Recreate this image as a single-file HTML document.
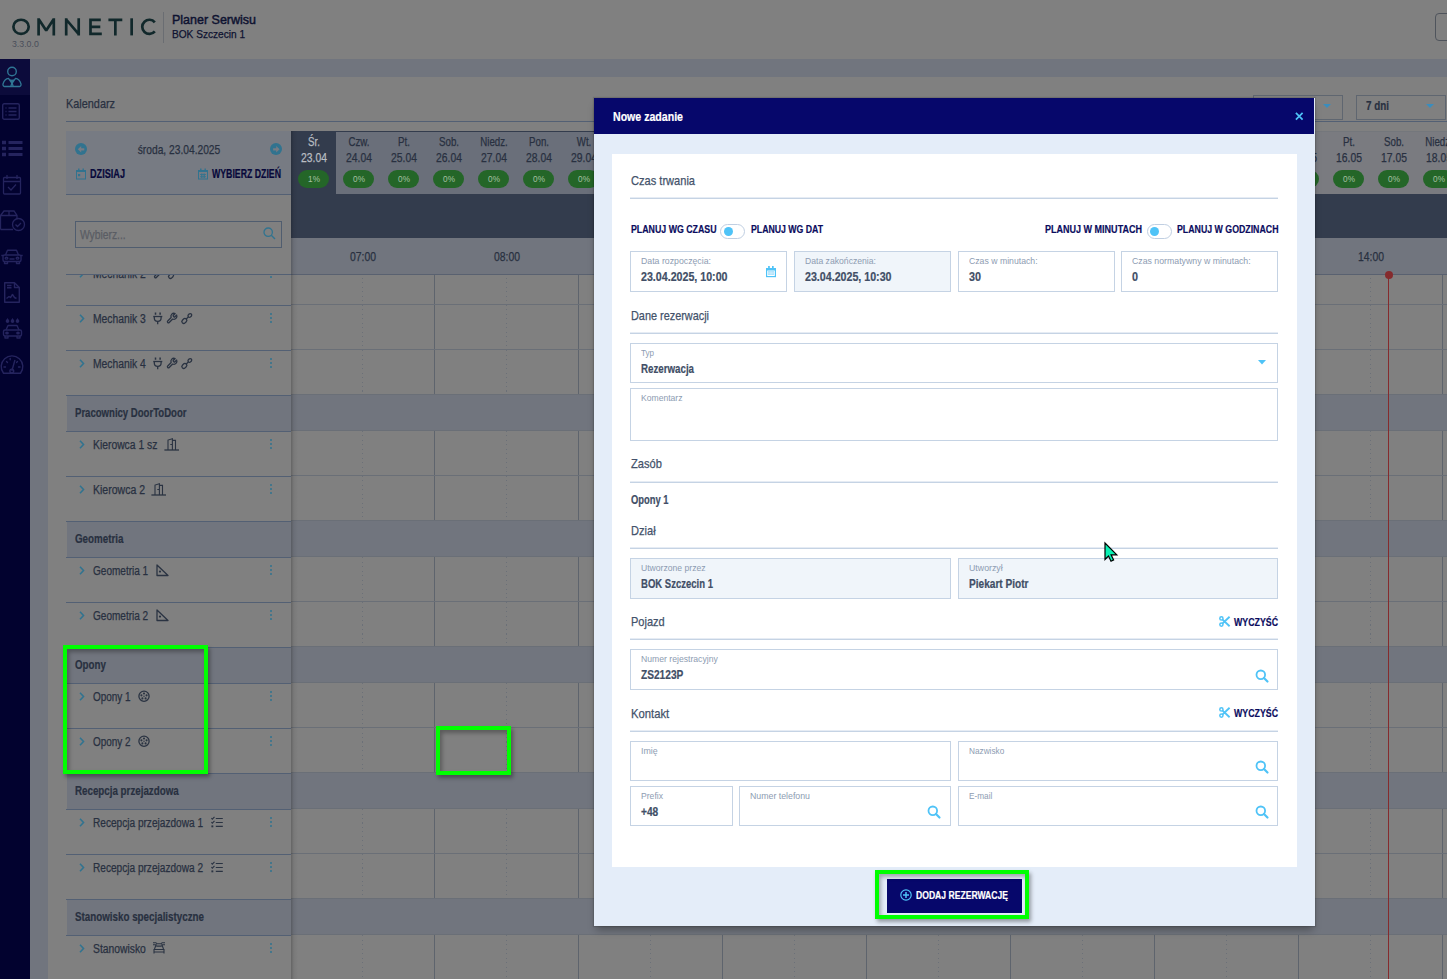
<!DOCTYPE html>
<html><head><meta charset="utf-8"><style>
html,body{margin:0;padding:0;}
body{width:1447px;height:979px;position:relative;overflow:hidden;background:#808080;font-family:"Liberation Sans",sans-serif;}
.a{position:absolute;}
.t{position:absolute;white-space:nowrap;line-height:1;}
svg.a{overflow:visible;}
</style></head><body>
<div class="a" style="left:0;top:0;width:1447px;height:59px;background:#808080"></div>
<svg class="a" style="left:0px;top:0px;" width="170" height="50" viewBox="0 0 170 50"><g stroke="#11282b" stroke-width="2.7" fill="none" stroke-linejoin="miter" stroke-miterlimit="1.5"><ellipse cx="21.05" cy="26.85" rx="7.65" ry="7.1"/><path d="M38.6 35.4V18.3M38.6 19L46.2 30.5 53.8 19M53.8 18.3V35.4" stroke-linecap="butt"/><path d="M66.2 35.4V18.3M66.2 19.5L78.7 34.2M78.7 35.4V18.3"/><path d="M100.8 19.8H90.5V33.9H101.8M90.5 26.85H100.3"/><path d="M108.4 19.8H122.3M115.35 19.8V35.4"/><path d="M131.65 18.3V35.4"/><path d="M154.8 22.3A7.1 7.1 0 1 0 154.8 31.4"/></g></svg>
<div class="t" style="left:12px;top:40.40px;transform-origin:0 0;font-size:8.5px;color:#4a4e5a;transform:scaleX(1.0310);">3.3.0.0</div>
<div class="a" style="left:163px;top:12px;width:1px;height:31px;background:#6a6d72;"></div>
<div class="t" style="left:172px;top:13.00px;transform-origin:0 0;font-size:13px;color:#0e1230;-webkit-text-stroke:0.25px #0e1230;transform:scaleX(0.9608);-webkit-text-stroke:0.45px #0e1230;">Planer Serwisu</div>
<div class="t" style="left:172px;top:28.89px;transform-origin:0 0;font-size:11px;color:#0e1230;-webkit-text-stroke:0.25px #0e1230;transform:scaleX(0.9185);">BOK Szczecin 1</div>
<div class="a" style="left:1435px;top:13px;width:30px;height:28px;border:1px solid #4f545c;border-radius:4px;box-sizing:border-box"></div>
<div class="a" style="left:0px;top:59px;width:30px;height:920px;background:#02022f;"></div>
<div class="a" style="left:0px;top:59px;width:30px;height:36px;background:#0c0b3b;"></div>
<div class="a" style="left:30px;top:59px;width:1417px;height:920px;background:#71757e;"></div>
<div class="a" style="left:48px;top:77px;width:1399px;height:902px;background:#808080;"></div>
<div class="t" style="left:66px;top:97.20px;transform-origin:0 0;font-size:13px;color:#283040;-webkit-text-stroke:0.25px #283040;transform:scaleX(0.8371);">Kalendarz</div>
<div class="a" style="left:66px;top:121px;width:1381px;height:1px;background:#536074;"></div>
<div class="a" style="left:1253px;top:95px;width:90px;height:25px;border:1px solid #5f6670;box-sizing:border-box"></div>
<div class="a" style="left:1356px;top:95px;width:90px;height:25px;border:1px solid #5f6670;box-sizing:border-box"></div>
<div class="t" style="left:1366px;top:100.24px;transform-origin:0 0;font-size:12px;color:#283040;font-weight:700;-webkit-text-stroke:0.2px #283040;transform:scaleX(0.8213);">7 dni</div>
<svg class="a" style="left:1323px;top:104px;" width="8" height="5" viewBox="0 0 8 5"><path d="M0 0H8L4 4Z" fill="#3a8dbd"/></svg>
<svg class="a" style="left:1426px;top:104px;" width="8" height="5" viewBox="0 0 8 5"><path d="M0 0H8L4 4Z" fill="#3a8dbd"/></svg>
<div class="a" style="left:434px;top:260px;width:1px;height:44px;background:#5e646d;"></div>
<div class="a" style="left:578px;top:260px;width:1px;height:44px;background:#5e646d;"></div>
<div class="a" style="left:722px;top:260px;width:1px;height:44px;background:#5e646d;"></div>
<div class="a" style="left:866px;top:260px;width:1px;height:44px;background:#5e646d;"></div>
<div class="a" style="left:1010px;top:260px;width:1px;height:44px;background:#5e646d;"></div>
<div class="a" style="left:1154px;top:260px;width:1px;height:44px;background:#5e646d;"></div>
<div class="a" style="left:1298px;top:260px;width:1px;height:44px;background:#5e646d;"></div>
<div class="a" style="left:1442px;top:260px;width:1px;height:44px;background:#5e646d;"></div>
<div class="a" style="left:362px;top:260px;width:1px;height:44px;background:repeating-linear-gradient(to bottom,#6b7078 0 1px,transparent 1px 4.5px)"></div>
<div class="a" style="left:506px;top:260px;width:1px;height:44px;background:repeating-linear-gradient(to bottom,#6b7078 0 1px,transparent 1px 4.5px)"></div>
<div class="a" style="left:650px;top:260px;width:1px;height:44px;background:repeating-linear-gradient(to bottom,#6b7078 0 1px,transparent 1px 4.5px)"></div>
<div class="a" style="left:794px;top:260px;width:1px;height:44px;background:repeating-linear-gradient(to bottom,#6b7078 0 1px,transparent 1px 4.5px)"></div>
<div class="a" style="left:938px;top:260px;width:1px;height:44px;background:repeating-linear-gradient(to bottom,#6b7078 0 1px,transparent 1px 4.5px)"></div>
<div class="a" style="left:1082px;top:260px;width:1px;height:44px;background:repeating-linear-gradient(to bottom,#6b7078 0 1px,transparent 1px 4.5px)"></div>
<div class="a" style="left:1226px;top:260px;width:1px;height:44px;background:repeating-linear-gradient(to bottom,#6b7078 0 1px,transparent 1px 4.5px)"></div>
<div class="a" style="left:1370px;top:260px;width:1px;height:44px;background:repeating-linear-gradient(to bottom,#6b7078 0 1px,transparent 1px 4.5px)"></div>
<div class="a" style="left:291px;top:304px;width:1156px;height:1px;background:#6a6f77;"></div>
<div class="a" style="left:66px;top:305px;width:225px;height:1px;background:#536074;"></div>
<div class="a" style="left:434px;top:305px;width:1px;height:44px;background:#5e646d;"></div>
<div class="a" style="left:578px;top:305px;width:1px;height:44px;background:#5e646d;"></div>
<div class="a" style="left:722px;top:305px;width:1px;height:44px;background:#5e646d;"></div>
<div class="a" style="left:866px;top:305px;width:1px;height:44px;background:#5e646d;"></div>
<div class="a" style="left:1010px;top:305px;width:1px;height:44px;background:#5e646d;"></div>
<div class="a" style="left:1154px;top:305px;width:1px;height:44px;background:#5e646d;"></div>
<div class="a" style="left:1298px;top:305px;width:1px;height:44px;background:#5e646d;"></div>
<div class="a" style="left:1442px;top:305px;width:1px;height:44px;background:#5e646d;"></div>
<div class="a" style="left:362px;top:305px;width:1px;height:44px;background:repeating-linear-gradient(to bottom,#6b7078 0 1px,transparent 1px 4.5px)"></div>
<div class="a" style="left:506px;top:305px;width:1px;height:44px;background:repeating-linear-gradient(to bottom,#6b7078 0 1px,transparent 1px 4.5px)"></div>
<div class="a" style="left:650px;top:305px;width:1px;height:44px;background:repeating-linear-gradient(to bottom,#6b7078 0 1px,transparent 1px 4.5px)"></div>
<div class="a" style="left:794px;top:305px;width:1px;height:44px;background:repeating-linear-gradient(to bottom,#6b7078 0 1px,transparent 1px 4.5px)"></div>
<div class="a" style="left:938px;top:305px;width:1px;height:44px;background:repeating-linear-gradient(to bottom,#6b7078 0 1px,transparent 1px 4.5px)"></div>
<div class="a" style="left:1082px;top:305px;width:1px;height:44px;background:repeating-linear-gradient(to bottom,#6b7078 0 1px,transparent 1px 4.5px)"></div>
<div class="a" style="left:1226px;top:305px;width:1px;height:44px;background:repeating-linear-gradient(to bottom,#6b7078 0 1px,transparent 1px 4.5px)"></div>
<div class="a" style="left:1370px;top:305px;width:1px;height:44px;background:repeating-linear-gradient(to bottom,#6b7078 0 1px,transparent 1px 4.5px)"></div>
<div class="a" style="left:291px;top:349px;width:1156px;height:1px;background:#6a6f77;"></div>
<div class="a" style="left:66px;top:350px;width:225px;height:1px;background:#536074;"></div>
<div class="a" style="left:434px;top:350px;width:1px;height:44px;background:#5e646d;"></div>
<div class="a" style="left:578px;top:350px;width:1px;height:44px;background:#5e646d;"></div>
<div class="a" style="left:722px;top:350px;width:1px;height:44px;background:#5e646d;"></div>
<div class="a" style="left:866px;top:350px;width:1px;height:44px;background:#5e646d;"></div>
<div class="a" style="left:1010px;top:350px;width:1px;height:44px;background:#5e646d;"></div>
<div class="a" style="left:1154px;top:350px;width:1px;height:44px;background:#5e646d;"></div>
<div class="a" style="left:1298px;top:350px;width:1px;height:44px;background:#5e646d;"></div>
<div class="a" style="left:1442px;top:350px;width:1px;height:44px;background:#5e646d;"></div>
<div class="a" style="left:362px;top:350px;width:1px;height:44px;background:repeating-linear-gradient(to bottom,#6b7078 0 1px,transparent 1px 4.5px)"></div>
<div class="a" style="left:506px;top:350px;width:1px;height:44px;background:repeating-linear-gradient(to bottom,#6b7078 0 1px,transparent 1px 4.5px)"></div>
<div class="a" style="left:650px;top:350px;width:1px;height:44px;background:repeating-linear-gradient(to bottom,#6b7078 0 1px,transparent 1px 4.5px)"></div>
<div class="a" style="left:794px;top:350px;width:1px;height:44px;background:repeating-linear-gradient(to bottom,#6b7078 0 1px,transparent 1px 4.5px)"></div>
<div class="a" style="left:938px;top:350px;width:1px;height:44px;background:repeating-linear-gradient(to bottom,#6b7078 0 1px,transparent 1px 4.5px)"></div>
<div class="a" style="left:1082px;top:350px;width:1px;height:44px;background:repeating-linear-gradient(to bottom,#6b7078 0 1px,transparent 1px 4.5px)"></div>
<div class="a" style="left:1226px;top:350px;width:1px;height:44px;background:repeating-linear-gradient(to bottom,#6b7078 0 1px,transparent 1px 4.5px)"></div>
<div class="a" style="left:1370px;top:350px;width:1px;height:44px;background:repeating-linear-gradient(to bottom,#6b7078 0 1px,transparent 1px 4.5px)"></div>
<div class="a" style="left:291px;top:394px;width:1156px;height:1px;background:#6a6f77;"></div>
<div class="a" style="left:66px;top:395px;width:225px;height:1px;background:#536074;"></div>
<div class="a" style="left:291px;top:395px;width:1156px;height:35px;background:#71757e;"></div>
<div class="a" style="left:67px;top:396px;width:224px;height:35px;background:#71757e;"></div>
<div class="a" style="left:291px;top:430px;width:1156px;height:1px;background:#6a6f77;"></div>
<div class="a" style="left:66px;top:431px;width:225px;height:1px;background:#536074;"></div>
<div class="a" style="left:434px;top:431px;width:1px;height:44px;background:#5e646d;"></div>
<div class="a" style="left:578px;top:431px;width:1px;height:44px;background:#5e646d;"></div>
<div class="a" style="left:722px;top:431px;width:1px;height:44px;background:#5e646d;"></div>
<div class="a" style="left:866px;top:431px;width:1px;height:44px;background:#5e646d;"></div>
<div class="a" style="left:1010px;top:431px;width:1px;height:44px;background:#5e646d;"></div>
<div class="a" style="left:1154px;top:431px;width:1px;height:44px;background:#5e646d;"></div>
<div class="a" style="left:1298px;top:431px;width:1px;height:44px;background:#5e646d;"></div>
<div class="a" style="left:1442px;top:431px;width:1px;height:44px;background:#5e646d;"></div>
<div class="a" style="left:362px;top:431px;width:1px;height:44px;background:repeating-linear-gradient(to bottom,#6b7078 0 1px,transparent 1px 4.5px)"></div>
<div class="a" style="left:506px;top:431px;width:1px;height:44px;background:repeating-linear-gradient(to bottom,#6b7078 0 1px,transparent 1px 4.5px)"></div>
<div class="a" style="left:650px;top:431px;width:1px;height:44px;background:repeating-linear-gradient(to bottom,#6b7078 0 1px,transparent 1px 4.5px)"></div>
<div class="a" style="left:794px;top:431px;width:1px;height:44px;background:repeating-linear-gradient(to bottom,#6b7078 0 1px,transparent 1px 4.5px)"></div>
<div class="a" style="left:938px;top:431px;width:1px;height:44px;background:repeating-linear-gradient(to bottom,#6b7078 0 1px,transparent 1px 4.5px)"></div>
<div class="a" style="left:1082px;top:431px;width:1px;height:44px;background:repeating-linear-gradient(to bottom,#6b7078 0 1px,transparent 1px 4.5px)"></div>
<div class="a" style="left:1226px;top:431px;width:1px;height:44px;background:repeating-linear-gradient(to bottom,#6b7078 0 1px,transparent 1px 4.5px)"></div>
<div class="a" style="left:1370px;top:431px;width:1px;height:44px;background:repeating-linear-gradient(to bottom,#6b7078 0 1px,transparent 1px 4.5px)"></div>
<div class="a" style="left:291px;top:475px;width:1156px;height:1px;background:#6a6f77;"></div>
<div class="a" style="left:66px;top:476px;width:225px;height:1px;background:#536074;"></div>
<div class="a" style="left:434px;top:476px;width:1px;height:44px;background:#5e646d;"></div>
<div class="a" style="left:578px;top:476px;width:1px;height:44px;background:#5e646d;"></div>
<div class="a" style="left:722px;top:476px;width:1px;height:44px;background:#5e646d;"></div>
<div class="a" style="left:866px;top:476px;width:1px;height:44px;background:#5e646d;"></div>
<div class="a" style="left:1010px;top:476px;width:1px;height:44px;background:#5e646d;"></div>
<div class="a" style="left:1154px;top:476px;width:1px;height:44px;background:#5e646d;"></div>
<div class="a" style="left:1298px;top:476px;width:1px;height:44px;background:#5e646d;"></div>
<div class="a" style="left:1442px;top:476px;width:1px;height:44px;background:#5e646d;"></div>
<div class="a" style="left:362px;top:476px;width:1px;height:44px;background:repeating-linear-gradient(to bottom,#6b7078 0 1px,transparent 1px 4.5px)"></div>
<div class="a" style="left:506px;top:476px;width:1px;height:44px;background:repeating-linear-gradient(to bottom,#6b7078 0 1px,transparent 1px 4.5px)"></div>
<div class="a" style="left:650px;top:476px;width:1px;height:44px;background:repeating-linear-gradient(to bottom,#6b7078 0 1px,transparent 1px 4.5px)"></div>
<div class="a" style="left:794px;top:476px;width:1px;height:44px;background:repeating-linear-gradient(to bottom,#6b7078 0 1px,transparent 1px 4.5px)"></div>
<div class="a" style="left:938px;top:476px;width:1px;height:44px;background:repeating-linear-gradient(to bottom,#6b7078 0 1px,transparent 1px 4.5px)"></div>
<div class="a" style="left:1082px;top:476px;width:1px;height:44px;background:repeating-linear-gradient(to bottom,#6b7078 0 1px,transparent 1px 4.5px)"></div>
<div class="a" style="left:1226px;top:476px;width:1px;height:44px;background:repeating-linear-gradient(to bottom,#6b7078 0 1px,transparent 1px 4.5px)"></div>
<div class="a" style="left:1370px;top:476px;width:1px;height:44px;background:repeating-linear-gradient(to bottom,#6b7078 0 1px,transparent 1px 4.5px)"></div>
<div class="a" style="left:291px;top:520px;width:1156px;height:1px;background:#6a6f77;"></div>
<div class="a" style="left:66px;top:521px;width:225px;height:1px;background:#536074;"></div>
<div class="a" style="left:291px;top:521px;width:1156px;height:35px;background:#71757e;"></div>
<div class="a" style="left:67px;top:522px;width:224px;height:35px;background:#71757e;"></div>
<div class="a" style="left:291px;top:556px;width:1156px;height:1px;background:#6a6f77;"></div>
<div class="a" style="left:66px;top:557px;width:225px;height:1px;background:#536074;"></div>
<div class="a" style="left:434px;top:557px;width:1px;height:44px;background:#5e646d;"></div>
<div class="a" style="left:578px;top:557px;width:1px;height:44px;background:#5e646d;"></div>
<div class="a" style="left:722px;top:557px;width:1px;height:44px;background:#5e646d;"></div>
<div class="a" style="left:866px;top:557px;width:1px;height:44px;background:#5e646d;"></div>
<div class="a" style="left:1010px;top:557px;width:1px;height:44px;background:#5e646d;"></div>
<div class="a" style="left:1154px;top:557px;width:1px;height:44px;background:#5e646d;"></div>
<div class="a" style="left:1298px;top:557px;width:1px;height:44px;background:#5e646d;"></div>
<div class="a" style="left:1442px;top:557px;width:1px;height:44px;background:#5e646d;"></div>
<div class="a" style="left:362px;top:557px;width:1px;height:44px;background:repeating-linear-gradient(to bottom,#6b7078 0 1px,transparent 1px 4.5px)"></div>
<div class="a" style="left:506px;top:557px;width:1px;height:44px;background:repeating-linear-gradient(to bottom,#6b7078 0 1px,transparent 1px 4.5px)"></div>
<div class="a" style="left:650px;top:557px;width:1px;height:44px;background:repeating-linear-gradient(to bottom,#6b7078 0 1px,transparent 1px 4.5px)"></div>
<div class="a" style="left:794px;top:557px;width:1px;height:44px;background:repeating-linear-gradient(to bottom,#6b7078 0 1px,transparent 1px 4.5px)"></div>
<div class="a" style="left:938px;top:557px;width:1px;height:44px;background:repeating-linear-gradient(to bottom,#6b7078 0 1px,transparent 1px 4.5px)"></div>
<div class="a" style="left:1082px;top:557px;width:1px;height:44px;background:repeating-linear-gradient(to bottom,#6b7078 0 1px,transparent 1px 4.5px)"></div>
<div class="a" style="left:1226px;top:557px;width:1px;height:44px;background:repeating-linear-gradient(to bottom,#6b7078 0 1px,transparent 1px 4.5px)"></div>
<div class="a" style="left:1370px;top:557px;width:1px;height:44px;background:repeating-linear-gradient(to bottom,#6b7078 0 1px,transparent 1px 4.5px)"></div>
<div class="a" style="left:291px;top:601px;width:1156px;height:1px;background:#6a6f77;"></div>
<div class="a" style="left:66px;top:602px;width:225px;height:1px;background:#536074;"></div>
<div class="a" style="left:434px;top:602px;width:1px;height:44px;background:#5e646d;"></div>
<div class="a" style="left:578px;top:602px;width:1px;height:44px;background:#5e646d;"></div>
<div class="a" style="left:722px;top:602px;width:1px;height:44px;background:#5e646d;"></div>
<div class="a" style="left:866px;top:602px;width:1px;height:44px;background:#5e646d;"></div>
<div class="a" style="left:1010px;top:602px;width:1px;height:44px;background:#5e646d;"></div>
<div class="a" style="left:1154px;top:602px;width:1px;height:44px;background:#5e646d;"></div>
<div class="a" style="left:1298px;top:602px;width:1px;height:44px;background:#5e646d;"></div>
<div class="a" style="left:1442px;top:602px;width:1px;height:44px;background:#5e646d;"></div>
<div class="a" style="left:362px;top:602px;width:1px;height:44px;background:repeating-linear-gradient(to bottom,#6b7078 0 1px,transparent 1px 4.5px)"></div>
<div class="a" style="left:506px;top:602px;width:1px;height:44px;background:repeating-linear-gradient(to bottom,#6b7078 0 1px,transparent 1px 4.5px)"></div>
<div class="a" style="left:650px;top:602px;width:1px;height:44px;background:repeating-linear-gradient(to bottom,#6b7078 0 1px,transparent 1px 4.5px)"></div>
<div class="a" style="left:794px;top:602px;width:1px;height:44px;background:repeating-linear-gradient(to bottom,#6b7078 0 1px,transparent 1px 4.5px)"></div>
<div class="a" style="left:938px;top:602px;width:1px;height:44px;background:repeating-linear-gradient(to bottom,#6b7078 0 1px,transparent 1px 4.5px)"></div>
<div class="a" style="left:1082px;top:602px;width:1px;height:44px;background:repeating-linear-gradient(to bottom,#6b7078 0 1px,transparent 1px 4.5px)"></div>
<div class="a" style="left:1226px;top:602px;width:1px;height:44px;background:repeating-linear-gradient(to bottom,#6b7078 0 1px,transparent 1px 4.5px)"></div>
<div class="a" style="left:1370px;top:602px;width:1px;height:44px;background:repeating-linear-gradient(to bottom,#6b7078 0 1px,transparent 1px 4.5px)"></div>
<div class="a" style="left:291px;top:646px;width:1156px;height:1px;background:#6a6f77;"></div>
<div class="a" style="left:66px;top:647px;width:225px;height:1px;background:#536074;"></div>
<div class="a" style="left:291px;top:647px;width:1156px;height:35px;background:#71757e;"></div>
<div class="a" style="left:67px;top:648px;width:224px;height:35px;background:#71757e;"></div>
<div class="a" style="left:291px;top:682px;width:1156px;height:1px;background:#6a6f77;"></div>
<div class="a" style="left:66px;top:683px;width:225px;height:1px;background:#536074;"></div>
<div class="a" style="left:434px;top:683px;width:1px;height:44px;background:#5e646d;"></div>
<div class="a" style="left:578px;top:683px;width:1px;height:44px;background:#5e646d;"></div>
<div class="a" style="left:722px;top:683px;width:1px;height:44px;background:#5e646d;"></div>
<div class="a" style="left:866px;top:683px;width:1px;height:44px;background:#5e646d;"></div>
<div class="a" style="left:1010px;top:683px;width:1px;height:44px;background:#5e646d;"></div>
<div class="a" style="left:1154px;top:683px;width:1px;height:44px;background:#5e646d;"></div>
<div class="a" style="left:1298px;top:683px;width:1px;height:44px;background:#5e646d;"></div>
<div class="a" style="left:1442px;top:683px;width:1px;height:44px;background:#5e646d;"></div>
<div class="a" style="left:362px;top:683px;width:1px;height:44px;background:repeating-linear-gradient(to bottom,#6b7078 0 1px,transparent 1px 4.5px)"></div>
<div class="a" style="left:506px;top:683px;width:1px;height:44px;background:repeating-linear-gradient(to bottom,#6b7078 0 1px,transparent 1px 4.5px)"></div>
<div class="a" style="left:650px;top:683px;width:1px;height:44px;background:repeating-linear-gradient(to bottom,#6b7078 0 1px,transparent 1px 4.5px)"></div>
<div class="a" style="left:794px;top:683px;width:1px;height:44px;background:repeating-linear-gradient(to bottom,#6b7078 0 1px,transparent 1px 4.5px)"></div>
<div class="a" style="left:938px;top:683px;width:1px;height:44px;background:repeating-linear-gradient(to bottom,#6b7078 0 1px,transparent 1px 4.5px)"></div>
<div class="a" style="left:1082px;top:683px;width:1px;height:44px;background:repeating-linear-gradient(to bottom,#6b7078 0 1px,transparent 1px 4.5px)"></div>
<div class="a" style="left:1226px;top:683px;width:1px;height:44px;background:repeating-linear-gradient(to bottom,#6b7078 0 1px,transparent 1px 4.5px)"></div>
<div class="a" style="left:1370px;top:683px;width:1px;height:44px;background:repeating-linear-gradient(to bottom,#6b7078 0 1px,transparent 1px 4.5px)"></div>
<div class="a" style="left:291px;top:727px;width:1156px;height:1px;background:#6a6f77;"></div>
<div class="a" style="left:66px;top:728px;width:225px;height:1px;background:#536074;"></div>
<div class="a" style="left:434px;top:728px;width:1px;height:44px;background:#5e646d;"></div>
<div class="a" style="left:578px;top:728px;width:1px;height:44px;background:#5e646d;"></div>
<div class="a" style="left:722px;top:728px;width:1px;height:44px;background:#5e646d;"></div>
<div class="a" style="left:866px;top:728px;width:1px;height:44px;background:#5e646d;"></div>
<div class="a" style="left:1010px;top:728px;width:1px;height:44px;background:#5e646d;"></div>
<div class="a" style="left:1154px;top:728px;width:1px;height:44px;background:#5e646d;"></div>
<div class="a" style="left:1298px;top:728px;width:1px;height:44px;background:#5e646d;"></div>
<div class="a" style="left:1442px;top:728px;width:1px;height:44px;background:#5e646d;"></div>
<div class="a" style="left:362px;top:728px;width:1px;height:44px;background:repeating-linear-gradient(to bottom,#6b7078 0 1px,transparent 1px 4.5px)"></div>
<div class="a" style="left:506px;top:728px;width:1px;height:44px;background:repeating-linear-gradient(to bottom,#6b7078 0 1px,transparent 1px 4.5px)"></div>
<div class="a" style="left:650px;top:728px;width:1px;height:44px;background:repeating-linear-gradient(to bottom,#6b7078 0 1px,transparent 1px 4.5px)"></div>
<div class="a" style="left:794px;top:728px;width:1px;height:44px;background:repeating-linear-gradient(to bottom,#6b7078 0 1px,transparent 1px 4.5px)"></div>
<div class="a" style="left:938px;top:728px;width:1px;height:44px;background:repeating-linear-gradient(to bottom,#6b7078 0 1px,transparent 1px 4.5px)"></div>
<div class="a" style="left:1082px;top:728px;width:1px;height:44px;background:repeating-linear-gradient(to bottom,#6b7078 0 1px,transparent 1px 4.5px)"></div>
<div class="a" style="left:1226px;top:728px;width:1px;height:44px;background:repeating-linear-gradient(to bottom,#6b7078 0 1px,transparent 1px 4.5px)"></div>
<div class="a" style="left:1370px;top:728px;width:1px;height:44px;background:repeating-linear-gradient(to bottom,#6b7078 0 1px,transparent 1px 4.5px)"></div>
<div class="a" style="left:291px;top:772px;width:1156px;height:1px;background:#6a6f77;"></div>
<div class="a" style="left:66px;top:773px;width:225px;height:1px;background:#536074;"></div>
<div class="a" style="left:291px;top:773px;width:1156px;height:35px;background:#71757e;"></div>
<div class="a" style="left:67px;top:774px;width:224px;height:35px;background:#71757e;"></div>
<div class="a" style="left:291px;top:808px;width:1156px;height:1px;background:#6a6f77;"></div>
<div class="a" style="left:66px;top:809px;width:225px;height:1px;background:#536074;"></div>
<div class="a" style="left:434px;top:809px;width:1px;height:44px;background:#5e646d;"></div>
<div class="a" style="left:578px;top:809px;width:1px;height:44px;background:#5e646d;"></div>
<div class="a" style="left:722px;top:809px;width:1px;height:44px;background:#5e646d;"></div>
<div class="a" style="left:866px;top:809px;width:1px;height:44px;background:#5e646d;"></div>
<div class="a" style="left:1010px;top:809px;width:1px;height:44px;background:#5e646d;"></div>
<div class="a" style="left:1154px;top:809px;width:1px;height:44px;background:#5e646d;"></div>
<div class="a" style="left:1298px;top:809px;width:1px;height:44px;background:#5e646d;"></div>
<div class="a" style="left:1442px;top:809px;width:1px;height:44px;background:#5e646d;"></div>
<div class="a" style="left:362px;top:809px;width:1px;height:44px;background:repeating-linear-gradient(to bottom,#6b7078 0 1px,transparent 1px 4.5px)"></div>
<div class="a" style="left:506px;top:809px;width:1px;height:44px;background:repeating-linear-gradient(to bottom,#6b7078 0 1px,transparent 1px 4.5px)"></div>
<div class="a" style="left:650px;top:809px;width:1px;height:44px;background:repeating-linear-gradient(to bottom,#6b7078 0 1px,transparent 1px 4.5px)"></div>
<div class="a" style="left:794px;top:809px;width:1px;height:44px;background:repeating-linear-gradient(to bottom,#6b7078 0 1px,transparent 1px 4.5px)"></div>
<div class="a" style="left:938px;top:809px;width:1px;height:44px;background:repeating-linear-gradient(to bottom,#6b7078 0 1px,transparent 1px 4.5px)"></div>
<div class="a" style="left:1082px;top:809px;width:1px;height:44px;background:repeating-linear-gradient(to bottom,#6b7078 0 1px,transparent 1px 4.5px)"></div>
<div class="a" style="left:1226px;top:809px;width:1px;height:44px;background:repeating-linear-gradient(to bottom,#6b7078 0 1px,transparent 1px 4.5px)"></div>
<div class="a" style="left:1370px;top:809px;width:1px;height:44px;background:repeating-linear-gradient(to bottom,#6b7078 0 1px,transparent 1px 4.5px)"></div>
<div class="a" style="left:291px;top:853px;width:1156px;height:1px;background:#6a6f77;"></div>
<div class="a" style="left:66px;top:854px;width:225px;height:1px;background:#536074;"></div>
<div class="a" style="left:434px;top:854px;width:1px;height:44px;background:#5e646d;"></div>
<div class="a" style="left:578px;top:854px;width:1px;height:44px;background:#5e646d;"></div>
<div class="a" style="left:722px;top:854px;width:1px;height:44px;background:#5e646d;"></div>
<div class="a" style="left:866px;top:854px;width:1px;height:44px;background:#5e646d;"></div>
<div class="a" style="left:1010px;top:854px;width:1px;height:44px;background:#5e646d;"></div>
<div class="a" style="left:1154px;top:854px;width:1px;height:44px;background:#5e646d;"></div>
<div class="a" style="left:1298px;top:854px;width:1px;height:44px;background:#5e646d;"></div>
<div class="a" style="left:1442px;top:854px;width:1px;height:44px;background:#5e646d;"></div>
<div class="a" style="left:362px;top:854px;width:1px;height:44px;background:repeating-linear-gradient(to bottom,#6b7078 0 1px,transparent 1px 4.5px)"></div>
<div class="a" style="left:506px;top:854px;width:1px;height:44px;background:repeating-linear-gradient(to bottom,#6b7078 0 1px,transparent 1px 4.5px)"></div>
<div class="a" style="left:650px;top:854px;width:1px;height:44px;background:repeating-linear-gradient(to bottom,#6b7078 0 1px,transparent 1px 4.5px)"></div>
<div class="a" style="left:794px;top:854px;width:1px;height:44px;background:repeating-linear-gradient(to bottom,#6b7078 0 1px,transparent 1px 4.5px)"></div>
<div class="a" style="left:938px;top:854px;width:1px;height:44px;background:repeating-linear-gradient(to bottom,#6b7078 0 1px,transparent 1px 4.5px)"></div>
<div class="a" style="left:1082px;top:854px;width:1px;height:44px;background:repeating-linear-gradient(to bottom,#6b7078 0 1px,transparent 1px 4.5px)"></div>
<div class="a" style="left:1226px;top:854px;width:1px;height:44px;background:repeating-linear-gradient(to bottom,#6b7078 0 1px,transparent 1px 4.5px)"></div>
<div class="a" style="left:1370px;top:854px;width:1px;height:44px;background:repeating-linear-gradient(to bottom,#6b7078 0 1px,transparent 1px 4.5px)"></div>
<div class="a" style="left:291px;top:898px;width:1156px;height:1px;background:#6a6f77;"></div>
<div class="a" style="left:66px;top:899px;width:225px;height:1px;background:#536074;"></div>
<div class="a" style="left:291px;top:899px;width:1156px;height:35px;background:#71757e;"></div>
<div class="a" style="left:67px;top:900px;width:224px;height:35px;background:#71757e;"></div>
<div class="a" style="left:291px;top:934px;width:1156px;height:1px;background:#6a6f77;"></div>
<div class="a" style="left:66px;top:935px;width:225px;height:1px;background:#536074;"></div>
<div class="a" style="left:434px;top:935px;width:1px;height:44px;background:#5e646d;"></div>
<div class="a" style="left:578px;top:935px;width:1px;height:44px;background:#5e646d;"></div>
<div class="a" style="left:722px;top:935px;width:1px;height:44px;background:#5e646d;"></div>
<div class="a" style="left:866px;top:935px;width:1px;height:44px;background:#5e646d;"></div>
<div class="a" style="left:1010px;top:935px;width:1px;height:44px;background:#5e646d;"></div>
<div class="a" style="left:1154px;top:935px;width:1px;height:44px;background:#5e646d;"></div>
<div class="a" style="left:1298px;top:935px;width:1px;height:44px;background:#5e646d;"></div>
<div class="a" style="left:1442px;top:935px;width:1px;height:44px;background:#5e646d;"></div>
<div class="a" style="left:362px;top:935px;width:1px;height:44px;background:repeating-linear-gradient(to bottom,#6b7078 0 1px,transparent 1px 4.5px)"></div>
<div class="a" style="left:506px;top:935px;width:1px;height:44px;background:repeating-linear-gradient(to bottom,#6b7078 0 1px,transparent 1px 4.5px)"></div>
<div class="a" style="left:650px;top:935px;width:1px;height:44px;background:repeating-linear-gradient(to bottom,#6b7078 0 1px,transparent 1px 4.5px)"></div>
<div class="a" style="left:794px;top:935px;width:1px;height:44px;background:repeating-linear-gradient(to bottom,#6b7078 0 1px,transparent 1px 4.5px)"></div>
<div class="a" style="left:938px;top:935px;width:1px;height:44px;background:repeating-linear-gradient(to bottom,#6b7078 0 1px,transparent 1px 4.5px)"></div>
<div class="a" style="left:1082px;top:935px;width:1px;height:44px;background:repeating-linear-gradient(to bottom,#6b7078 0 1px,transparent 1px 4.5px)"></div>
<div class="a" style="left:1226px;top:935px;width:1px;height:44px;background:repeating-linear-gradient(to bottom,#6b7078 0 1px,transparent 1px 4.5px)"></div>
<div class="a" style="left:1370px;top:935px;width:1px;height:44px;background:repeating-linear-gradient(to bottom,#6b7078 0 1px,transparent 1px 4.5px)"></div>
<div class="a" style="left:291px;top:979px;width:1156px;height:1px;background:#6a6f77;"></div>
<div class="a" style="left:66px;top:980px;width:225px;height:1px;background:#536074;"></div>
<div class="a" style="left:1388px;top:275px;width:1px;height:704px;background:#852b2d;"></div>
<svg class="a" style="left:79px;top:269px;" width="6" height="9" viewBox="0 0 6 9"><path d="M1 0.8L4.5 4.5 1 8.2" stroke="#31738f" stroke-width="1.6" fill="none"/></svg>
<div class="t" style="left:93px;top:267.84px;transform-origin:0 0;font-size:12px;color:#283040;-webkit-text-stroke:0.25px #283040;transform:scaleX(0.8600);">Mechanik 2</div>
<svg class="a" style="left:153px;top:267px;" width="40" height="13" viewBox="0 0 40 13"><path transform="translate(0 0.3) scale(0.5)" d="M14.7 6.3a1 1 0 0 0 0 1.4l1.6 1.6a1 1 0 0 0 1.4 0l3.77-3.77a6 6 0 0 1-7.94 7.94l-6.91 6.91a2.12 2.12 0 0 1-3-3l6.91-6.91a6 6 0 0 1 7.94-7.94l-3.76 3.76z" stroke="#2a3342" stroke-width="2.5" fill="none" stroke-linejoin="round"/><g transform="translate(20.5 6.5) rotate(45)" stroke="#2a3342" stroke-width="1.3" fill="none"><rect x="-1.5" y="-6.3" width="3" height="4" rx="1.5"/><rect x="-1.9" y="0.8" width="3.8" height="5.4" rx="1.9"/><path d="M0 -2.3V0.8"/></g></svg>
<div class="a" style="left:269.5px;top:267.7px;width:2.6px;height:2.6px;border-radius:1px;background:#31738f"></div>
<div class="a" style="left:269.5px;top:271.7px;width:2.6px;height:2.6px;border-radius:1px;background:#31738f"></div>
<div class="a" style="left:269.5px;top:275.7px;width:2.6px;height:2.6px;border-radius:1px;background:#31738f"></div>
<svg class="a" style="left:79px;top:314px;" width="6" height="9" viewBox="0 0 6 9"><path d="M1 0.8L4.5 4.5 1 8.2" stroke="#31738f" stroke-width="1.6" fill="none"/></svg>
<div class="t" style="left:93px;top:312.84px;transform-origin:0 0;font-size:12px;color:#283040;-webkit-text-stroke:0.25px #283040;transform:scaleX(0.8600);">Mechanik 3</div>
<svg class="a" style="left:153px;top:312px;" width="40" height="13" viewBox="0 0 40 13"><g stroke="#2a3342" stroke-width="1.3" fill="none"><path d="M2.5 0.6V2.8M7.1 0.6V2.8" stroke-width="1.5"/><path d="M0.3 4.5H9.3"/><path d="M1.3 4.5V6A3.4 3.4 0 0 0 8.1 6V4.5"/><path d="M4.7 9.4V12.3"/></g><path transform="translate(12.9 0.3) scale(0.5)" d="M14.7 6.3a1 1 0 0 0 0 1.4l1.6 1.6a1 1 0 0 0 1.4 0l3.77-3.77a6 6 0 0 1-7.94 7.94l-6.91 6.91a2.12 2.12 0 0 1-3-3l6.91-6.91a6 6 0 0 1 7.94-7.94l-3.76 3.76z" stroke="#2a3342" stroke-width="2.5" fill="none" stroke-linejoin="round"/><g transform="translate(33.8 6.5) rotate(45)" stroke="#2a3342" stroke-width="1.3" fill="none"><rect x="-1.5" y="-6.3" width="3" height="4" rx="1.5"/><rect x="-1.9" y="0.8" width="3.8" height="5.4" rx="1.9"/><path d="M0 -2.3V0.8"/></g></svg>
<div class="a" style="left:269.5px;top:312.7px;width:2.6px;height:2.6px;border-radius:1px;background:#31738f"></div>
<div class="a" style="left:269.5px;top:316.7px;width:2.6px;height:2.6px;border-radius:1px;background:#31738f"></div>
<div class="a" style="left:269.5px;top:320.7px;width:2.6px;height:2.6px;border-radius:1px;background:#31738f"></div>
<svg class="a" style="left:79px;top:359px;" width="6" height="9" viewBox="0 0 6 9"><path d="M1 0.8L4.5 4.5 1 8.2" stroke="#31738f" stroke-width="1.6" fill="none"/></svg>
<div class="t" style="left:93px;top:357.84px;transform-origin:0 0;font-size:12px;color:#283040;-webkit-text-stroke:0.25px #283040;transform:scaleX(0.8600);">Mechanik 4</div>
<svg class="a" style="left:153px;top:357px;" width="40" height="13" viewBox="0 0 40 13"><g stroke="#2a3342" stroke-width="1.3" fill="none"><path d="M2.5 0.6V2.8M7.1 0.6V2.8" stroke-width="1.5"/><path d="M0.3 4.5H9.3"/><path d="M1.3 4.5V6A3.4 3.4 0 0 0 8.1 6V4.5"/><path d="M4.7 9.4V12.3"/></g><path transform="translate(12.9 0.3) scale(0.5)" d="M14.7 6.3a1 1 0 0 0 0 1.4l1.6 1.6a1 1 0 0 0 1.4 0l3.77-3.77a6 6 0 0 1-7.94 7.94l-6.91 6.91a2.12 2.12 0 0 1-3-3l6.91-6.91a6 6 0 0 1 7.94-7.94l-3.76 3.76z" stroke="#2a3342" stroke-width="2.5" fill="none" stroke-linejoin="round"/><g transform="translate(33.8 6.5) rotate(45)" stroke="#2a3342" stroke-width="1.3" fill="none"><rect x="-1.5" y="-6.3" width="3" height="4" rx="1.5"/><rect x="-1.9" y="0.8" width="3.8" height="5.4" rx="1.9"/><path d="M0 -2.3V0.8"/></g></svg>
<div class="a" style="left:269.5px;top:357.7px;width:2.6px;height:2.6px;border-radius:1px;background:#31738f"></div>
<div class="a" style="left:269.5px;top:361.7px;width:2.6px;height:2.6px;border-radius:1px;background:#31738f"></div>
<div class="a" style="left:269.5px;top:365.7px;width:2.6px;height:2.6px;border-radius:1px;background:#31738f"></div>
<div class="t" style="left:75px;top:406.84px;transform-origin:0 0;font-size:12px;color:#283040;font-weight:700;-webkit-text-stroke:0.2px #283040;transform:scaleX(0.7976);">Pracownicy DoorToDoor</div>
<svg class="a" style="left:79px;top:440px;" width="6" height="9" viewBox="0 0 6 9"><path d="M1 0.8L4.5 4.5 1 8.2" stroke="#31738f" stroke-width="1.6" fill="none"/></svg>
<div class="t" style="left:93px;top:438.84px;transform-origin:0 0;font-size:12px;color:#283040;-webkit-text-stroke:0.25px #283040;transform:scaleX(0.8621);">Kierowca 1 sz</div>
<svg class="a" style="left:165px;top:438px;" width="13" height="12" viewBox="0 0 13 12"><path d="M-0.6 12H14" stroke="#2a3342" stroke-width="1.3"/><path d="M3 12V2.1L7.4 0.7V12M7.4 2.4H10.5V12M5.3 6.5H7.4" stroke="#2a3342" stroke-width="1.1" fill="none"/></svg>
<div class="a" style="left:269.5px;top:438.7px;width:2.6px;height:2.6px;border-radius:1px;background:#31738f"></div>
<div class="a" style="left:269.5px;top:442.7px;width:2.6px;height:2.6px;border-radius:1px;background:#31738f"></div>
<div class="a" style="left:269.5px;top:446.7px;width:2.6px;height:2.6px;border-radius:1px;background:#31738f"></div>
<svg class="a" style="left:79px;top:485px;" width="6" height="9" viewBox="0 0 6 9"><path d="M1 0.8L4.5 4.5 1 8.2" stroke="#31738f" stroke-width="1.6" fill="none"/></svg>
<div class="t" style="left:93px;top:483.84px;transform-origin:0 0;font-size:12px;color:#283040;-webkit-text-stroke:0.25px #283040;transform:scaleX(0.8760);">Kierowca 2</div>
<svg class="a" style="left:152px;top:483px;" width="13" height="12" viewBox="0 0 13 12"><path d="M-0.6 12H14" stroke="#2a3342" stroke-width="1.3"/><path d="M3 12V2.1L7.4 0.7V12M7.4 2.4H10.5V12M5.3 6.5H7.4" stroke="#2a3342" stroke-width="1.1" fill="none"/></svg>
<div class="a" style="left:269.5px;top:483.7px;width:2.6px;height:2.6px;border-radius:1px;background:#31738f"></div>
<div class="a" style="left:269.5px;top:487.7px;width:2.6px;height:2.6px;border-radius:1px;background:#31738f"></div>
<div class="a" style="left:269.5px;top:491.7px;width:2.6px;height:2.6px;border-radius:1px;background:#31738f"></div>
<div class="t" style="left:75px;top:532.84px;transform-origin:0 0;font-size:12px;color:#283040;font-weight:700;-webkit-text-stroke:0.2px #283040;transform:scaleX(0.8154);">Geometria</div>
<svg class="a" style="left:79px;top:566px;" width="6" height="9" viewBox="0 0 6 9"><path d="M1 0.8L4.5 4.5 1 8.2" stroke="#31738f" stroke-width="1.6" fill="none"/></svg>
<div class="t" style="left:93px;top:564.84px;transform-origin:0 0;font-size:12px;color:#283040;-webkit-text-stroke:0.25px #283040;transform:scaleX(0.8359);">Geometria 1</div>
<svg class="a" style="left:156px;top:564px;" width="13" height="12" viewBox="0 0 13 12"><path d="M1 1V11.5H12Z" stroke="#2a3342" stroke-width="1.3" fill="none" stroke-linejoin="round"/><circle cx="4" cy="7.6" r="1.1" fill="#2a3342"/></svg>
<div class="a" style="left:269.5px;top:564.7px;width:2.6px;height:2.6px;border-radius:1px;background:#31738f"></div>
<div class="a" style="left:269.5px;top:568.7px;width:2.6px;height:2.6px;border-radius:1px;background:#31738f"></div>
<div class="a" style="left:269.5px;top:572.7px;width:2.6px;height:2.6px;border-radius:1px;background:#31738f"></div>
<svg class="a" style="left:79px;top:611px;" width="6" height="9" viewBox="0 0 6 9"><path d="M1 0.8L4.5 4.5 1 8.2" stroke="#31738f" stroke-width="1.6" fill="none"/></svg>
<div class="t" style="left:93px;top:609.84px;transform-origin:0 0;font-size:12px;color:#283040;-webkit-text-stroke:0.25px #283040;transform:scaleX(0.8359);">Geometria 2</div>
<svg class="a" style="left:156px;top:609px;" width="13" height="12" viewBox="0 0 13 12"><path d="M1 1V11.5H12Z" stroke="#2a3342" stroke-width="1.3" fill="none" stroke-linejoin="round"/><circle cx="4" cy="7.6" r="1.1" fill="#2a3342"/></svg>
<div class="a" style="left:269.5px;top:609.7px;width:2.6px;height:2.6px;border-radius:1px;background:#31738f"></div>
<div class="a" style="left:269.5px;top:613.7px;width:2.6px;height:2.6px;border-radius:1px;background:#31738f"></div>
<div class="a" style="left:269.5px;top:617.7px;width:2.6px;height:2.6px;border-radius:1px;background:#31738f"></div>
<div class="t" style="left:75px;top:658.84px;transform-origin:0 0;font-size:12px;color:#283040;font-weight:700;-webkit-text-stroke:0.2px #283040;transform:scaleX(0.8105);">Opony</div>
<svg class="a" style="left:79px;top:692px;" width="6" height="9" viewBox="0 0 6 9"><path d="M1 0.8L4.5 4.5 1 8.2" stroke="#31738f" stroke-width="1.6" fill="none"/></svg>
<div class="t" style="left:93px;top:690.84px;transform-origin:0 0;font-size:12px;color:#283040;-webkit-text-stroke:0.25px #283040;transform:scaleX(0.8288);">Opony 1</div>
<svg class="a" style="left:138px;top:690px;" width="12" height="12" viewBox="0 0 12 12"><circle cx="6" cy="6.2" r="5.1" stroke="#2a3342" stroke-width="1.3" fill="none"/><circle cx="6.00" cy="3.50" r="1.05" fill="#2a3342"/><circle cx="8.57" cy="5.37" r="1.05" fill="#2a3342"/><circle cx="7.59" cy="8.38" r="1.05" fill="#2a3342"/><circle cx="4.41" cy="8.38" r="1.05" fill="#2a3342"/><circle cx="3.43" cy="5.37" r="1.05" fill="#2a3342"/><circle cx="6" cy="6.2" r="0.7" fill="#2a3342"/></svg>
<div class="a" style="left:269.5px;top:690.7px;width:2.6px;height:2.6px;border-radius:1px;background:#31738f"></div>
<div class="a" style="left:269.5px;top:694.7px;width:2.6px;height:2.6px;border-radius:1px;background:#31738f"></div>
<div class="a" style="left:269.5px;top:698.7px;width:2.6px;height:2.6px;border-radius:1px;background:#31738f"></div>
<svg class="a" style="left:79px;top:737px;" width="6" height="9" viewBox="0 0 6 9"><path d="M1 0.8L4.5 4.5 1 8.2" stroke="#31738f" stroke-width="1.6" fill="none"/></svg>
<div class="t" style="left:93px;top:735.84px;transform-origin:0 0;font-size:12px;color:#283040;-webkit-text-stroke:0.25px #283040;transform:scaleX(0.8288);">Opony 2</div>
<svg class="a" style="left:138px;top:735px;" width="12" height="12" viewBox="0 0 12 12"><circle cx="6" cy="6.2" r="5.1" stroke="#2a3342" stroke-width="1.3" fill="none"/><circle cx="6.00" cy="3.50" r="1.05" fill="#2a3342"/><circle cx="8.57" cy="5.37" r="1.05" fill="#2a3342"/><circle cx="7.59" cy="8.38" r="1.05" fill="#2a3342"/><circle cx="4.41" cy="8.38" r="1.05" fill="#2a3342"/><circle cx="3.43" cy="5.37" r="1.05" fill="#2a3342"/><circle cx="6" cy="6.2" r="0.7" fill="#2a3342"/></svg>
<div class="a" style="left:269.5px;top:735.7px;width:2.6px;height:2.6px;border-radius:1px;background:#31738f"></div>
<div class="a" style="left:269.5px;top:739.7px;width:2.6px;height:2.6px;border-radius:1px;background:#31738f"></div>
<div class="a" style="left:269.5px;top:743.7px;width:2.6px;height:2.6px;border-radius:1px;background:#31738f"></div>
<div class="t" style="left:75px;top:784.84px;transform-origin:0 0;font-size:12px;color:#283040;font-weight:700;-webkit-text-stroke:0.2px #283040;transform:scaleX(0.8140);">Recepcja przejazdowa</div>
<svg class="a" style="left:79px;top:818px;" width="6" height="9" viewBox="0 0 6 9"><path d="M1 0.8L4.5 4.5 1 8.2" stroke="#31738f" stroke-width="1.6" fill="none"/></svg>
<div class="t" style="left:93px;top:816.84px;transform-origin:0 0;font-size:12px;color:#283040;-webkit-text-stroke:0.25px #283040;transform:scaleX(0.8413);">Recepcja przejazdowa 1</div>
<svg class="a" style="left:211px;top:816px;" width="12" height="12" viewBox="0 0 12 12"><path d="M0.4 2.2L1.3 3.1 3.5 0.9M0.4 6.2L1.3 7.1 3.5 4.9" stroke="#2a3342" stroke-width="1.1" fill="none"/><rect x="0.4" y="9.4" width="1.9" height="1.9" fill="#2a3342"/><path d="M4.8 2.5H11.8M4.8 6.5H11.8M4.8 10.4H11.8" stroke="#2a3342" stroke-width="1.2"/></svg>
<div class="a" style="left:269.5px;top:816.7px;width:2.6px;height:2.6px;border-radius:1px;background:#31738f"></div>
<div class="a" style="left:269.5px;top:820.7px;width:2.6px;height:2.6px;border-radius:1px;background:#31738f"></div>
<div class="a" style="left:269.5px;top:824.7px;width:2.6px;height:2.6px;border-radius:1px;background:#31738f"></div>
<svg class="a" style="left:79px;top:863px;" width="6" height="9" viewBox="0 0 6 9"><path d="M1 0.8L4.5 4.5 1 8.2" stroke="#31738f" stroke-width="1.6" fill="none"/></svg>
<div class="t" style="left:93px;top:861.84px;transform-origin:0 0;font-size:12px;color:#283040;-webkit-text-stroke:0.25px #283040;transform:scaleX(0.8413);">Recepcja przejazdowa 2</div>
<svg class="a" style="left:211px;top:861px;" width="12" height="12" viewBox="0 0 12 12"><path d="M0.4 2.2L1.3 3.1 3.5 0.9M0.4 6.2L1.3 7.1 3.5 4.9" stroke="#2a3342" stroke-width="1.1" fill="none"/><rect x="0.4" y="9.4" width="1.9" height="1.9" fill="#2a3342"/><path d="M4.8 2.5H11.8M4.8 6.5H11.8M4.8 10.4H11.8" stroke="#2a3342" stroke-width="1.2"/></svg>
<div class="a" style="left:269.5px;top:861.7px;width:2.6px;height:2.6px;border-radius:1px;background:#31738f"></div>
<div class="a" style="left:269.5px;top:865.7px;width:2.6px;height:2.6px;border-radius:1px;background:#31738f"></div>
<div class="a" style="left:269.5px;top:869.7px;width:2.6px;height:2.6px;border-radius:1px;background:#31738f"></div>
<div class="t" style="left:75px;top:910.84px;transform-origin:0 0;font-size:12px;color:#283040;font-weight:700;-webkit-text-stroke:0.2px #283040;transform:scaleX(0.8161);">Stanowisko specjalistyczne</div>
<svg class="a" style="left:79px;top:944px;" width="6" height="9" viewBox="0 0 6 9"><path d="M1 0.8L4.5 4.5 1 8.2" stroke="#31738f" stroke-width="1.6" fill="none"/></svg>
<div class="t" style="left:93px;top:942.84px;transform-origin:0 0;font-size:12px;color:#283040;-webkit-text-stroke:0.25px #283040;transform:scaleX(0.8604);">Stanowisko</div>
<svg class="a" style="left:153px;top:942px;" width="13" height="12" viewBox="0 0 13 12"><path d="M0 0.8H3.5M0 2.7H3.5M8.5 0.8H12M8.5 2.7H12M3 1.8H9M3.3 4.1H8.7M3 3L1.5 7 M9 3L10.5 7M1 11.5V7.5H11V11.5M1 10H11" stroke="#2a3342" stroke-width="1.1" fill="none"/></svg>
<div class="a" style="left:269.5px;top:942.7px;width:2.6px;height:2.6px;border-radius:1px;background:#31738f"></div>
<div class="a" style="left:269.5px;top:946.7px;width:2.6px;height:2.6px;border-radius:1px;background:#31738f"></div>
<div class="a" style="left:269.5px;top:950.7px;width:2.6px;height:2.6px;border-radius:1px;background:#31738f"></div>
<div class="a" style="left:66px;top:122px;width:225px;height:153px;background:#808080;"></div>
<div class="a" style="left:66px;top:131px;width:225px;height:63px;background:#777b83;"></div>
<div class="a" style="left:66px;top:194px;width:225px;height:1px;background:#536074;"></div>
<div class="a" style="left:66px;top:274px;width:225px;height:1px;background:#536074;"></div>
<svg class="a" style="left:75.2px;top:143.2px;" width="12" height="12" viewBox="0 0 12 12"><circle cx="6" cy="6" r="6" fill="#31738f"/><path d="M2.8 6.3L6.2 3V5.2H9.3V7.4H6.2V9.6Z" fill="#777b83"/></svg>
<svg class="a" style="left:270.4px;top:143.2px;" width="12" height="12" viewBox="0 0 12 12"><circle cx="6" cy="6" r="6" fill="#31738f"/><path d="M9.6 6.3L6.2 3V5.2H3.1V7.4H6.2V9.6Z" fill="#777b83"/></svg>
<div class="t" style="left:-221.5px;width:800px;text-align:center;top:142.70px;transform-origin:50% 0;font-size:13px;color:#283040;-webkit-text-stroke:0.25px #283040;transform:scaleX(0.7872);">środa, 23.04.2025</div>
<svg class="a" style="left:76px;top:168px;" width="10" height="12" viewBox="0 0 10 12"><rect x="0.5" y="2.5" width="9" height="8.5" stroke="#31738f" stroke-width="1" fill="none"/><path d="M0.5 3.3H9.5M2.8 0.5V2.5M7.2 0.5V2.5" stroke="#31738f" stroke-width="1.4"/><rect x="2" y="6" width="2.2" height="2.2" fill="#31738f"/></svg>
<div class="t" style="left:90px;top:168.24px;transform-origin:0 0;font-size:12px;color:#07083a;font-weight:700;-webkit-text-stroke:0.2px #07083a;transform:scaleX(0.7607);">DZISIAJ</div>
<svg class="a" style="left:198px;top:168px;" width="10" height="12" viewBox="0 0 10 12"><rect x="0.5" y="2.5" width="9" height="8.5" stroke="#31738f" stroke-width="1" fill="none"/><path d="M0.5 3.3H9.5M2.8 0.5V2.5M7.2 0.5V2.5" stroke="#31738f" stroke-width="1.4"/><path d="M2 6.5H8M2 8.7H8M3.5 5.5V10M5 5.5V10M6.5 5.5V10" stroke="#31738f" stroke-width=".8"/></svg>
<div class="t" style="left:212px;top:168.24px;transform-origin:0 0;font-size:12px;color:#07083a;font-weight:700;-webkit-text-stroke:0.2px #07083a;transform:scaleX(0.7289);">WYBIERZ DZIEŃ</div>
<div class="a" style="left:75px;top:221px;width:207px;height:27px;border:1px solid #505d6f;box-sizing:border-box"></div>
<div class="t" style="left:80px;top:228.84px;transform-origin:0 0;font-size:12px;color:#5a5d64;-webkit-text-stroke:0.25px #5a5d64;transform:scaleX(0.8566);">Wybierz...</div>
<svg class="a" style="left:263px;top:227px;" width="13" height="13" viewBox="0 0 13 13"><circle cx="5.2" cy="5.2" r="4.2" stroke="#31738f" stroke-width="1.3" fill="none"/><path d="M8.3 8.3L12 12" stroke="#31738f" stroke-width="1.4"/></svg>
<div class="a" style="left:291px;top:131px;width:1156px;height:107px;background:#333c4d;"></div>
<div class="a" style="left:1315px;top:131px;width:132px;height:1px;background:#74777c;"></div>
<div class="a" style="left:1315px;top:132px;width:132px;height:62px;background:#7a7b80;"></div>
<div class="t" style="left:-86.5px;width:800px;text-align:center;top:135.64px;transform-origin:50% 0;font-size:12px;color:#b9bcc2;-webkit-text-stroke:0.25px #b9bcc2;transform:scaleX(0.8100);">Śr.</div>
<div class="t" style="left:-86.5px;width:800px;text-align:center;top:151.64px;transform-origin:50% 0;font-size:12px;color:#b9bcc2;-webkit-text-stroke:0.25px #b9bcc2;transform:scaleX(0.8600);">23.04</div>
<div class="a" style="left:298px;top:170px;width:31px;height:18px;border-radius:9px;background:#246628"></div>
<div class="t" style="left:-86.5px;width:800px;text-align:center;top:173.96px;transform-origin:50% 0;font-size:9.5px;color:#a6c2a3;transform:scaleX(0.8600);">1%</div>
<div class="a" style="left:336px;top:132px;width:45px;height:62px;background:#6a6f7a;"></div>
<div class="t" style="left:-41.5px;width:800px;text-align:center;top:135.64px;transform-origin:50% 0;font-size:12px;color:#283040;-webkit-text-stroke:0.25px #283040;transform:scaleX(0.8100);">Czw.</div>
<div class="t" style="left:-41.5px;width:800px;text-align:center;top:151.64px;transform-origin:50% 0;font-size:12px;color:#283040;-webkit-text-stroke:0.25px #283040;transform:scaleX(0.8600);">24.04</div>
<div class="a" style="left:343px;top:170px;width:31px;height:18px;border-radius:9px;background:#246628"></div>
<div class="t" style="left:-41.5px;width:800px;text-align:center;top:173.96px;transform-origin:50% 0;font-size:9.5px;color:#a6c2a3;transform:scaleX(0.8600);">0%</div>
<div class="a" style="left:381px;top:132px;width:45px;height:62px;background:#6a6f7a;"></div>
<div class="t" style="left:3.5px;width:800px;text-align:center;top:135.64px;transform-origin:50% 0;font-size:12px;color:#283040;-webkit-text-stroke:0.25px #283040;transform:scaleX(0.8100);">Pt.</div>
<div class="t" style="left:3.5px;width:800px;text-align:center;top:151.64px;transform-origin:50% 0;font-size:12px;color:#283040;-webkit-text-stroke:0.25px #283040;transform:scaleX(0.8600);">25.04</div>
<div class="a" style="left:388px;top:170px;width:31px;height:18px;border-radius:9px;background:#246628"></div>
<div class="t" style="left:3.5px;width:800px;text-align:center;top:173.96px;transform-origin:50% 0;font-size:9.5px;color:#a6c2a3;transform:scaleX(0.8600);">0%</div>
<div class="a" style="left:426px;top:132px;width:45px;height:62px;background:#6a6f7a;"></div>
<div class="t" style="left:48.5px;width:800px;text-align:center;top:135.64px;transform-origin:50% 0;font-size:12px;color:#283040;-webkit-text-stroke:0.25px #283040;transform:scaleX(0.8100);">Sob.</div>
<div class="t" style="left:48.5px;width:800px;text-align:center;top:151.64px;transform-origin:50% 0;font-size:12px;color:#283040;-webkit-text-stroke:0.25px #283040;transform:scaleX(0.8600);">26.04</div>
<div class="a" style="left:433px;top:170px;width:31px;height:18px;border-radius:9px;background:#246628"></div>
<div class="t" style="left:48.5px;width:800px;text-align:center;top:173.96px;transform-origin:50% 0;font-size:9.5px;color:#a6c2a3;transform:scaleX(0.8600);">0%</div>
<div class="a" style="left:471px;top:132px;width:45px;height:62px;background:#6a6f7a;"></div>
<div class="t" style="left:93.5px;width:800px;text-align:center;top:135.64px;transform-origin:50% 0;font-size:12px;color:#283040;-webkit-text-stroke:0.25px #283040;transform:scaleX(0.8100);">Niedz.</div>
<div class="t" style="left:93.5px;width:800px;text-align:center;top:151.64px;transform-origin:50% 0;font-size:12px;color:#283040;-webkit-text-stroke:0.25px #283040;transform:scaleX(0.8600);">27.04</div>
<div class="a" style="left:478px;top:170px;width:31px;height:18px;border-radius:9px;background:#246628"></div>
<div class="t" style="left:93.5px;width:800px;text-align:center;top:173.96px;transform-origin:50% 0;font-size:9.5px;color:#a6c2a3;transform:scaleX(0.8600);">0%</div>
<div class="a" style="left:516px;top:132px;width:45px;height:62px;background:#6a6f7a;"></div>
<div class="t" style="left:138.5px;width:800px;text-align:center;top:135.64px;transform-origin:50% 0;font-size:12px;color:#283040;-webkit-text-stroke:0.25px #283040;transform:scaleX(0.8100);">Pon.</div>
<div class="t" style="left:138.5px;width:800px;text-align:center;top:151.64px;transform-origin:50% 0;font-size:12px;color:#283040;-webkit-text-stroke:0.25px #283040;transform:scaleX(0.8600);">28.04</div>
<div class="a" style="left:523px;top:170px;width:31px;height:18px;border-radius:9px;background:#246628"></div>
<div class="t" style="left:138.5px;width:800px;text-align:center;top:173.96px;transform-origin:50% 0;font-size:9.5px;color:#a6c2a3;transform:scaleX(0.8600);">0%</div>
<div class="a" style="left:561px;top:132px;width:45px;height:62px;background:#6a6f7a;"></div>
<div class="t" style="left:183.5px;width:800px;text-align:center;top:135.64px;transform-origin:50% 0;font-size:12px;color:#283040;-webkit-text-stroke:0.25px #283040;transform:scaleX(0.8100);">Wt.</div>
<div class="t" style="left:183.5px;width:800px;text-align:center;top:151.64px;transform-origin:50% 0;font-size:12px;color:#283040;-webkit-text-stroke:0.25px #283040;transform:scaleX(0.8600);">29.04</div>
<div class="a" style="left:568px;top:170px;width:31px;height:18px;border-radius:9px;background:#246628"></div>
<div class="t" style="left:183.5px;width:800px;text-align:center;top:173.96px;transform-origin:50% 0;font-size:9.5px;color:#a6c2a3;transform:scaleX(0.8600);">0%</div>
<div class="a" style="left:606px;top:132px;width:45px;height:62px;background:#6a6f7a;"></div>
<div class="t" style="left:228.5px;width:800px;text-align:center;top:135.64px;transform-origin:50% 0;font-size:12px;color:#283040;-webkit-text-stroke:0.25px #283040;transform:scaleX(0.8100);">Śr.</div>
<div class="t" style="left:228.5px;width:800px;text-align:center;top:151.64px;transform-origin:50% 0;font-size:12px;color:#283040;-webkit-text-stroke:0.25px #283040;transform:scaleX(0.8600);">30.04</div>
<div class="a" style="left:613px;top:170px;width:31px;height:18px;border-radius:9px;background:#246628"></div>
<div class="t" style="left:228.5px;width:800px;text-align:center;top:173.96px;transform-origin:50% 0;font-size:9.5px;color:#a6c2a3;transform:scaleX(0.8600);">0%</div>
<div class="a" style="left:651px;top:132px;width:45px;height:62px;background:#6a6f7a;"></div>
<div class="t" style="left:273.5px;width:800px;text-align:center;top:135.64px;transform-origin:50% 0;font-size:12px;color:#283040;-webkit-text-stroke:0.25px #283040;transform:scaleX(0.8100);">Czw.</div>
<div class="t" style="left:273.5px;width:800px;text-align:center;top:151.64px;transform-origin:50% 0;font-size:12px;color:#283040;-webkit-text-stroke:0.25px #283040;transform:scaleX(0.8600);">01.05</div>
<div class="a" style="left:658px;top:170px;width:31px;height:18px;border-radius:9px;background:#246628"></div>
<div class="t" style="left:273.5px;width:800px;text-align:center;top:173.96px;transform-origin:50% 0;font-size:9.5px;color:#a6c2a3;transform:scaleX(0.8600);">0%</div>
<div class="a" style="left:696px;top:132px;width:45px;height:62px;background:#6a6f7a;"></div>
<div class="t" style="left:318.5px;width:800px;text-align:center;top:135.64px;transform-origin:50% 0;font-size:12px;color:#283040;-webkit-text-stroke:0.25px #283040;transform:scaleX(0.8100);">Pt.</div>
<div class="t" style="left:318.5px;width:800px;text-align:center;top:151.64px;transform-origin:50% 0;font-size:12px;color:#283040;-webkit-text-stroke:0.25px #283040;transform:scaleX(0.8600);">02.05</div>
<div class="a" style="left:703px;top:170px;width:31px;height:18px;border-radius:9px;background:#246628"></div>
<div class="t" style="left:318.5px;width:800px;text-align:center;top:173.96px;transform-origin:50% 0;font-size:9.5px;color:#a6c2a3;transform:scaleX(0.8600);">0%</div>
<div class="a" style="left:741px;top:132px;width:45px;height:62px;background:#6a6f7a;"></div>
<div class="t" style="left:363.5px;width:800px;text-align:center;top:135.64px;transform-origin:50% 0;font-size:12px;color:#283040;-webkit-text-stroke:0.25px #283040;transform:scaleX(0.8100);">Sob.</div>
<div class="t" style="left:363.5px;width:800px;text-align:center;top:151.64px;transform-origin:50% 0;font-size:12px;color:#283040;-webkit-text-stroke:0.25px #283040;transform:scaleX(0.8600);">03.05</div>
<div class="a" style="left:748px;top:170px;width:31px;height:18px;border-radius:9px;background:#246628"></div>
<div class="t" style="left:363.5px;width:800px;text-align:center;top:173.96px;transform-origin:50% 0;font-size:9.5px;color:#a6c2a3;transform:scaleX(0.8600);">0%</div>
<div class="a" style="left:786px;top:132px;width:45px;height:62px;background:#6a6f7a;"></div>
<div class="t" style="left:408.5px;width:800px;text-align:center;top:135.64px;transform-origin:50% 0;font-size:12px;color:#283040;-webkit-text-stroke:0.25px #283040;transform:scaleX(0.8100);">Niedz.</div>
<div class="t" style="left:408.5px;width:800px;text-align:center;top:151.64px;transform-origin:50% 0;font-size:12px;color:#283040;-webkit-text-stroke:0.25px #283040;transform:scaleX(0.8600);">04.05</div>
<div class="a" style="left:793px;top:170px;width:31px;height:18px;border-radius:9px;background:#246628"></div>
<div class="t" style="left:408.5px;width:800px;text-align:center;top:173.96px;transform-origin:50% 0;font-size:9.5px;color:#a6c2a3;transform:scaleX(0.8600);">0%</div>
<div class="a" style="left:831px;top:132px;width:45px;height:62px;background:#6a6f7a;"></div>
<div class="t" style="left:453.5px;width:800px;text-align:center;top:135.64px;transform-origin:50% 0;font-size:12px;color:#283040;-webkit-text-stroke:0.25px #283040;transform:scaleX(0.8100);">Pon.</div>
<div class="t" style="left:453.5px;width:800px;text-align:center;top:151.64px;transform-origin:50% 0;font-size:12px;color:#283040;-webkit-text-stroke:0.25px #283040;transform:scaleX(0.8600);">05.05</div>
<div class="a" style="left:838px;top:170px;width:31px;height:18px;border-radius:9px;background:#246628"></div>
<div class="t" style="left:453.5px;width:800px;text-align:center;top:173.96px;transform-origin:50% 0;font-size:9.5px;color:#a6c2a3;transform:scaleX(0.8600);">0%</div>
<div class="a" style="left:876px;top:132px;width:45px;height:62px;background:#6a6f7a;"></div>
<div class="t" style="left:498.5px;width:800px;text-align:center;top:135.64px;transform-origin:50% 0;font-size:12px;color:#283040;-webkit-text-stroke:0.25px #283040;transform:scaleX(0.8100);">Wt.</div>
<div class="t" style="left:498.5px;width:800px;text-align:center;top:151.64px;transform-origin:50% 0;font-size:12px;color:#283040;-webkit-text-stroke:0.25px #283040;transform:scaleX(0.8600);">06.05</div>
<div class="a" style="left:883px;top:170px;width:31px;height:18px;border-radius:9px;background:#246628"></div>
<div class="t" style="left:498.5px;width:800px;text-align:center;top:173.96px;transform-origin:50% 0;font-size:9.5px;color:#a6c2a3;transform:scaleX(0.8600);">0%</div>
<div class="a" style="left:921px;top:132px;width:45px;height:62px;background:#6a6f7a;"></div>
<div class="t" style="left:543.5px;width:800px;text-align:center;top:135.64px;transform-origin:50% 0;font-size:12px;color:#283040;-webkit-text-stroke:0.25px #283040;transform:scaleX(0.8100);">Śr.</div>
<div class="t" style="left:543.5px;width:800px;text-align:center;top:151.64px;transform-origin:50% 0;font-size:12px;color:#283040;-webkit-text-stroke:0.25px #283040;transform:scaleX(0.8600);">07.05</div>
<div class="a" style="left:928px;top:170px;width:31px;height:18px;border-radius:9px;background:#246628"></div>
<div class="t" style="left:543.5px;width:800px;text-align:center;top:173.96px;transform-origin:50% 0;font-size:9.5px;color:#a6c2a3;transform:scaleX(0.8600);">0%</div>
<div class="a" style="left:966px;top:132px;width:45px;height:62px;background:#6a6f7a;"></div>
<div class="t" style="left:588.5px;width:800px;text-align:center;top:135.64px;transform-origin:50% 0;font-size:12px;color:#283040;-webkit-text-stroke:0.25px #283040;transform:scaleX(0.8100);">Czw.</div>
<div class="t" style="left:588.5px;width:800px;text-align:center;top:151.64px;transform-origin:50% 0;font-size:12px;color:#283040;-webkit-text-stroke:0.25px #283040;transform:scaleX(0.8600);">08.05</div>
<div class="a" style="left:973px;top:170px;width:31px;height:18px;border-radius:9px;background:#246628"></div>
<div class="t" style="left:588.5px;width:800px;text-align:center;top:173.96px;transform-origin:50% 0;font-size:9.5px;color:#a6c2a3;transform:scaleX(0.8600);">0%</div>
<div class="a" style="left:1011px;top:132px;width:45px;height:62px;background:#6a6f7a;"></div>
<div class="t" style="left:633.5px;width:800px;text-align:center;top:135.64px;transform-origin:50% 0;font-size:12px;color:#283040;-webkit-text-stroke:0.25px #283040;transform:scaleX(0.8100);">Pt.</div>
<div class="t" style="left:633.5px;width:800px;text-align:center;top:151.64px;transform-origin:50% 0;font-size:12px;color:#283040;-webkit-text-stroke:0.25px #283040;transform:scaleX(0.8600);">09.05</div>
<div class="a" style="left:1018px;top:170px;width:31px;height:18px;border-radius:9px;background:#246628"></div>
<div class="t" style="left:633.5px;width:800px;text-align:center;top:173.96px;transform-origin:50% 0;font-size:9.5px;color:#a6c2a3;transform:scaleX(0.8600);">0%</div>
<div class="a" style="left:1056px;top:132px;width:45px;height:62px;background:#6a6f7a;"></div>
<div class="t" style="left:678.5px;width:800px;text-align:center;top:135.64px;transform-origin:50% 0;font-size:12px;color:#283040;-webkit-text-stroke:0.25px #283040;transform:scaleX(0.8100);">Sob.</div>
<div class="t" style="left:678.5px;width:800px;text-align:center;top:151.64px;transform-origin:50% 0;font-size:12px;color:#283040;-webkit-text-stroke:0.25px #283040;transform:scaleX(0.8600);">10.05</div>
<div class="a" style="left:1063px;top:170px;width:31px;height:18px;border-radius:9px;background:#246628"></div>
<div class="t" style="left:678.5px;width:800px;text-align:center;top:173.96px;transform-origin:50% 0;font-size:9.5px;color:#a6c2a3;transform:scaleX(0.8600);">0%</div>
<div class="a" style="left:1101px;top:132px;width:45px;height:62px;background:#6a6f7a;"></div>
<div class="t" style="left:723.5px;width:800px;text-align:center;top:135.64px;transform-origin:50% 0;font-size:12px;color:#283040;-webkit-text-stroke:0.25px #283040;transform:scaleX(0.8100);">Niedz.</div>
<div class="t" style="left:723.5px;width:800px;text-align:center;top:151.64px;transform-origin:50% 0;font-size:12px;color:#283040;-webkit-text-stroke:0.25px #283040;transform:scaleX(0.8600);">11.05</div>
<div class="a" style="left:1108px;top:170px;width:31px;height:18px;border-radius:9px;background:#246628"></div>
<div class="t" style="left:723.5px;width:800px;text-align:center;top:173.96px;transform-origin:50% 0;font-size:9.5px;color:#a6c2a3;transform:scaleX(0.8600);">0%</div>
<div class="a" style="left:1146px;top:132px;width:45px;height:62px;background:#6a6f7a;"></div>
<div class="t" style="left:768.5px;width:800px;text-align:center;top:135.64px;transform-origin:50% 0;font-size:12px;color:#283040;-webkit-text-stroke:0.25px #283040;transform:scaleX(0.8100);">Pon.</div>
<div class="t" style="left:768.5px;width:800px;text-align:center;top:151.64px;transform-origin:50% 0;font-size:12px;color:#283040;-webkit-text-stroke:0.25px #283040;transform:scaleX(0.8600);">12.05</div>
<div class="a" style="left:1153px;top:170px;width:31px;height:18px;border-radius:9px;background:#246628"></div>
<div class="t" style="left:768.5px;width:800px;text-align:center;top:173.96px;transform-origin:50% 0;font-size:9.5px;color:#a6c2a3;transform:scaleX(0.8600);">0%</div>
<div class="a" style="left:1191px;top:132px;width:45px;height:62px;background:#6a6f7a;"></div>
<div class="t" style="left:813.5px;width:800px;text-align:center;top:135.64px;transform-origin:50% 0;font-size:12px;color:#283040;-webkit-text-stroke:0.25px #283040;transform:scaleX(0.8100);">Wt.</div>
<div class="t" style="left:813.5px;width:800px;text-align:center;top:151.64px;transform-origin:50% 0;font-size:12px;color:#283040;-webkit-text-stroke:0.25px #283040;transform:scaleX(0.8600);">13.05</div>
<div class="a" style="left:1198px;top:170px;width:31px;height:18px;border-radius:9px;background:#246628"></div>
<div class="t" style="left:813.5px;width:800px;text-align:center;top:173.96px;transform-origin:50% 0;font-size:9.5px;color:#a6c2a3;transform:scaleX(0.8600);">0%</div>
<div class="a" style="left:1236px;top:132px;width:45px;height:62px;background:#6a6f7a;"></div>
<div class="t" style="left:858.5px;width:800px;text-align:center;top:135.64px;transform-origin:50% 0;font-size:12px;color:#283040;-webkit-text-stroke:0.25px #283040;transform:scaleX(0.8100);">Śr.</div>
<div class="t" style="left:858.5px;width:800px;text-align:center;top:151.64px;transform-origin:50% 0;font-size:12px;color:#283040;-webkit-text-stroke:0.25px #283040;transform:scaleX(0.8600);">14.05</div>
<div class="a" style="left:1243px;top:170px;width:31px;height:18px;border-radius:9px;background:#246628"></div>
<div class="t" style="left:858.5px;width:800px;text-align:center;top:173.96px;transform-origin:50% 0;font-size:9.5px;color:#a6c2a3;transform:scaleX(0.8600);">0%</div>
<div class="a" style="left:1281px;top:132px;width:34px;height:62px;background:#6a6f7a;"></div>
<div class="t" style="left:903.5px;width:800px;text-align:center;top:135.64px;transform-origin:50% 0;font-size:12px;color:#283040;-webkit-text-stroke:0.25px #283040;transform:scaleX(0.8100);">Czw.</div>
<div class="t" style="left:903.5px;width:800px;text-align:center;top:151.64px;transform-origin:50% 0;font-size:12px;color:#283040;-webkit-text-stroke:0.25px #283040;transform:scaleX(0.8600);">15.05</div>
<div class="a" style="left:1288px;top:170px;width:31px;height:18px;border-radius:9px;background:#246628"></div>
<div class="t" style="left:903.5px;width:800px;text-align:center;top:173.96px;transform-origin:50% 0;font-size:9.5px;color:#a6c2a3;transform:scaleX(0.8600);">0%</div>
<div class="t" style="left:948.5px;width:800px;text-align:center;top:135.64px;transform-origin:50% 0;font-size:12px;color:#283040;-webkit-text-stroke:0.25px #283040;transform:scaleX(0.8100);">Pt.</div>
<div class="t" style="left:948.5px;width:800px;text-align:center;top:151.64px;transform-origin:50% 0;font-size:12px;color:#283040;-webkit-text-stroke:0.25px #283040;transform:scaleX(0.8600);">16.05</div>
<div class="a" style="left:1333px;top:170px;width:31px;height:18px;border-radius:9px;background:#246628"></div>
<div class="t" style="left:948.5px;width:800px;text-align:center;top:173.96px;transform-origin:50% 0;font-size:9.5px;color:#a6c2a3;transform:scaleX(0.8600);">0%</div>
<div class="t" style="left:993.5px;width:800px;text-align:center;top:135.64px;transform-origin:50% 0;font-size:12px;color:#283040;-webkit-text-stroke:0.25px #283040;transform:scaleX(0.8100);">Sob.</div>
<div class="t" style="left:993.5px;width:800px;text-align:center;top:151.64px;transform-origin:50% 0;font-size:12px;color:#283040;-webkit-text-stroke:0.25px #283040;transform:scaleX(0.8600);">17.05</div>
<div class="a" style="left:1378px;top:170px;width:31px;height:18px;border-radius:9px;background:#246628"></div>
<div class="t" style="left:993.5px;width:800px;text-align:center;top:173.96px;transform-origin:50% 0;font-size:9.5px;color:#a6c2a3;transform:scaleX(0.8600);">0%</div>
<div class="t" style="left:1038.5px;width:800px;text-align:center;top:135.64px;transform-origin:50% 0;font-size:12px;color:#283040;-webkit-text-stroke:0.25px #283040;transform:scaleX(0.8100);">Niedz.</div>
<div class="t" style="left:1038.5px;width:800px;text-align:center;top:151.64px;transform-origin:50% 0;font-size:12px;color:#283040;-webkit-text-stroke:0.25px #283040;transform:scaleX(0.8600);">18.05</div>
<div class="a" style="left:1423px;top:170px;width:31px;height:18px;border-radius:9px;background:#246628"></div>
<div class="t" style="left:1038.5px;width:800px;text-align:center;top:173.96px;transform-origin:50% 0;font-size:9.5px;color:#a6c2a3;transform:scaleX(0.8600);">0%</div>
<div class="a" style="left:291px;top:238px;width:1156px;height:37px;background:#71757e;"></div>
<div class="a" style="left:291px;top:274px;width:1156px;height:1px;background:#596170;"></div>
<div class="a" style="left:1384.5px;top:270.5px;width:8px;height:8px;border-radius:50%;background:#852b2d"></div>
<div class="t" style="left:-37px;width:800px;text-align:center;top:250.52px;transform-origin:50% 0;font-size:12.5px;color:#283040;-webkit-text-stroke:0.25px #283040;transform:scaleX(0.8312);">07:00</div>
<div class="t" style="left:107px;width:800px;text-align:center;top:250.52px;transform-origin:50% 0;font-size:12.5px;color:#283040;-webkit-text-stroke:0.25px #283040;transform:scaleX(0.8312);">08:00</div>
<div class="t" style="left:251px;width:800px;text-align:center;top:250.52px;transform-origin:50% 0;font-size:12.5px;color:#283040;-webkit-text-stroke:0.25px #283040;transform:scaleX(0.8312);">09:00</div>
<div class="t" style="left:395px;width:800px;text-align:center;top:250.52px;transform-origin:50% 0;font-size:12.5px;color:#283040;-webkit-text-stroke:0.25px #283040;transform:scaleX(0.8312);">10:00</div>
<div class="t" style="left:539px;width:800px;text-align:center;top:250.52px;transform-origin:50% 0;font-size:12.5px;color:#283040;-webkit-text-stroke:0.25px #283040;transform:scaleX(0.8566);">11:00</div>
<div class="t" style="left:683px;width:800px;text-align:center;top:250.52px;transform-origin:50% 0;font-size:12.5px;color:#283040;-webkit-text-stroke:0.25px #283040;transform:scaleX(0.8312);">12:00</div>
<div class="t" style="left:827px;width:800px;text-align:center;top:250.52px;transform-origin:50% 0;font-size:12.5px;color:#283040;-webkit-text-stroke:0.25px #283040;transform:scaleX(0.8312);">13:00</div>
<div class="t" style="left:971px;width:800px;text-align:center;top:250.52px;transform-origin:50% 0;font-size:12.5px;color:#283040;-webkit-text-stroke:0.25px #283040;transform:scaleX(0.8312);">14:00</div>
<div class="a" style="left:291px;top:131px;width:7px;height:848px;background:linear-gradient(to right,rgba(0,0,0,.22),rgba(0,0,0,.06) 40%,rgba(0,0,0,0))"></div>
<svg class="a" style="left:2px;top:64px;" width="20" height="25" viewBox="0 0 20 25"><circle cx="10" cy="7.5" r="4.3" stroke="#2f7594" stroke-width="1.4" fill="none"/><path d="M2.5 22.5H17.5A2 2 0 0 0 19 20C18 16.5 16 14.5 13.5 14.3L10 19.5 6.5 14.3C4 14.5 2 16.5 1 20A2 2 0 0 0 2.5 22.5Z M8.5 15.5L10 17.5 11.5 15.5M8.8 22.5L10 18.5 11.2 22.5" stroke="#2f7594" stroke-width="1.3" fill="none" stroke-linejoin="round"/></svg>
<svg class="a" style="left:2px;top:103px;" width="18" height="17" viewBox="0 0 18 17"><rect x="0.7" y="0.7" width="16.6" height="15.6" rx="1.5" stroke="#25245e" stroke-width="1.4" fill="none"/><path d="M3.5 5H4.5M3.5 8.5H4.5M3.5 12H4.5M6.5 5H14.5M6.5 8.5H14.5M6.5 12H14.5" stroke="#25245e" stroke-width="1.3"/></svg>
<svg class="a" style="left:1px;top:141px;" width="22" height="16" viewBox="0 0 22 16"><path d="M1 1.5H5M1 7.5H5M1 13.5H5" stroke="#25245e" stroke-width="3.6"/><path d="M7.5 1.5H21.5M7.5 7.5H21.5M7.5 13.5H21.5" stroke="#25245e" stroke-width="2.8"/></svg>
<svg class="a" style="left:3px;top:175px;" width="18" height="20" viewBox="0 0 18 20"><rect x="0.5" y="2.5" width="17" height="16.5" rx="1" stroke="#25245e" stroke-width="1.3" fill="none"/><path d="M0.5 6.5H17.5M4 0V4M14 0V4M5 12L8 15 13 9.5" stroke="#25245e" stroke-width="1.3" fill="none"/></svg>
<svg class="a" style="left:0px;top:209px;" width="26" height="22" viewBox="0 0 26 22"><path d="M0.5 20.5V6.5L4 2H14L17 6.5V10M0.5 6.5H17M9 2V6.5M0.5 20.5H13" stroke="#25245e" stroke-width="1.3" fill="none"/><circle cx="18.5" cy="15.5" r="6" stroke="#25245e" stroke-width="1.3" fill="none"/><path d="M15.5 15.5L17.5 17.5 21 14" stroke="#25245e" stroke-width="1.3" fill="none"/></svg>
<svg class="a" style="left:1px;top:249px;" width="22" height="16" viewBox="0 0 22 16"><g stroke="#25245e" stroke-width="1.4" fill="none" stroke-linejoin="round"><path d="M4.5 6L6.5 1.2H15.5L17.5 6"/><rect x="2" y="6" width="18" height="6.5" rx="1.5"/><path d="M3.5 12.5V14.5H6.5V12.5M15.5 12.5V14.5H18.5V12.5M0.3 6.5H2M20 6.5H21.7M8.5 10H13.5"/><ellipse cx="5.5" cy="9.2" rx="1.3" ry="0.9"/><ellipse cx="16.5" cy="9.2" rx="1.3" ry="0.9"/></g></svg>
<svg class="a" style="left:4px;top:282px;" width="16" height="21" viewBox="0 0 16 21"><g stroke="#25245e" stroke-width="1.4" fill="none" stroke-linejoin="round"><path d="M0.7 0.7H10.5L15.3 5.5V20.3H0.7Z"/><path d="M10.5 0.7V5.5H15.3"/><path d="M3 3.5H7.5M3 5.8H7.5"/><path d="M2.5 16.5L5 14.5 6.5 15.5 8.5 12.5 10.5 15.5 12.5 16.5"/></g></svg>
<svg class="a" style="left:2px;top:317px;" width="21" height="23" viewBox="0 0 21 23"><g fill="#25245e"><path d="M5.5 1L7.2 3.6A1.8 1.8 0 1 1 3.8 3.6Z"/><path d="M10.5 1L12.2 3.6A1.8 1.8 0 1 1 8.8 3.6Z"/><path d="M15.5 1L17.2 3.6A1.8 1.8 0 1 1 13.8 3.6Z"/></g><g stroke="#25245e" stroke-width="1.4" fill="none" stroke-linejoin="round"><path d="M4 13L6 8.5H15L17 13"/><rect x="1.5" y="13" width="18" height="6" rx="1.5"/><path d="M3 19V21H6V19M15 19V21H18V19"/><ellipse cx="5" cy="16" rx="1.2" ry="0.8"/><ellipse cx="16" cy="16" rx="1.2" ry="0.8"/></g></svg>
<svg class="a" style="left:0px;top:355px;" width="24" height="20" viewBox="0 0 24 20"><g stroke="#25245e" stroke-width="1.4" fill="none" stroke-linecap="round"><path d="M3.5 18.3A10.8 10.8 0 1 1 20.5 18.3Z"/><path d="M12 15.5L14.8 5.5"/><circle cx="11.8" cy="16" r="1.9"/><path d="M4 12H5.5M18.5 12H20M6.5 6.5L7.5 7.5M17.5 6.5L16.5 7.5M10.2 3.5V4.8"/></g></svg>
<div class="a" style="left:594px;top:98px;width:721px;height:828px;background:#e4edf9;box-shadow:0 0 1px 1px rgba(0,0,0,.12),0 6px 8px -2px rgba(0,0,0,.3)"></div>
<div class="a" style="left:594px;top:98px;width:720px;height:36px;background:#06076b;"></div>
<div class="t" style="left:613px;top:110.82px;transform-origin:0 0;font-size:12.5px;color:#ffffff;font-weight:700;-webkit-text-stroke:0.2px #ffffff;transform:scaleX(0.8469);">Nowe zadanie</div>
<svg class="a" style="left:1294.5px;top:112px;" width="9" height="9" viewBox="0 0 9 9"><path d="M0.9 0.9L7.6 7.6M7.6 0.9L0.9 7.6" stroke="#4fc3f7" stroke-width="1.7"/></svg>
<div class="a" style="left:612px;top:154px;width:685px;height:713px;background:#ffffff;"></div>
<div class="t" style="left:630.5px;top:174.00px;transform-origin:0 0;font-size:13px;color:#43526a;-webkit-text-stroke:0.25px #43526a;transform:scaleX(0.8518);">Czas trwania</div>
<div class="a" style="left:630px;top:197px;width:648px;height:1px;background:#e6ecf4;"></div>
<div class="a" style="left:630px;top:198px;width:648px;height:1px;background:#c5d3e4;"></div>
<div class="t" style="left:630.5px;top:223.69px;transform-origin:0 0;font-size:11px;color:#0b0c5e;font-weight:700;-webkit-text-stroke:0.2px #0b0c5e;transform:scaleX(0.7995);">PLANUJ WG CZASU</div>
<div class="a" style="left:720px;top:224px;width:25px;height:15px;border:1px solid #c0cfe2;border-radius:8px;box-sizing:border-box;background:#fff"></div>
<div class="a" style="left:723.5px;top:227px;width:9px;height:9px;border-radius:50%;background:#4fc3f7"></div>
<div class="t" style="left:751px;top:223.69px;transform-origin:0 0;font-size:11px;color:#0b0c5e;font-weight:700;-webkit-text-stroke:0.2px #0b0c5e;transform:scaleX(0.7925);">PLANUJ WG DAT</div>
<div class="t" style="left:1045px;top:223.69px;transform-origin:0 0;font-size:11px;color:#0b0c5e;font-weight:700;-webkit-text-stroke:0.2px #0b0c5e;transform:scaleX(0.8197);">PLANUJ W MINUTACH</div>
<div class="a" style="left:1146.5px;top:224px;width:25px;height:15px;border:1px solid #c0cfe2;border-radius:8px;box-sizing:border-box;background:#fff"></div>
<div class="a" style="left:1150.0px;top:227px;width:9px;height:9px;border-radius:50%;background:#4fc3f7"></div>
<div class="t" style="left:1176.5px;top:223.69px;transform-origin:0 0;font-size:11px;color:#0b0c5e;font-weight:700;-webkit-text-stroke:0.2px #0b0c5e;transform:scaleX(0.7985);">PLANUJ W GODZINACH</div>
<div class="a" style="left:630px;top:251px;width:157px;height:41px;border:1px solid #c5d3e4;box-sizing:border-box;background:#ffffff"></div>
<div class="t" style="left:640.5px;top:256.10px;transform-origin:0 0;font-size:9.8px;color:#8d9cb2;transform:scaleX(0.8924);">Data rozpoczęcia:</div>
<div class="t" style="left:641px;top:271.42px;transform-origin:0 0;font-size:12.5px;color:#414e66;font-weight:700;-webkit-text-stroke:0.2px #414e66;transform:scaleX(0.8525);">23.04.2025, 10:00</div>
<svg class="a" style="left:766px;top:266px;" width="10" height="12" viewBox="0 0 10 12"><rect x="2.1" y="0" width="1.7" height="2.6" fill="#4fc3f7"/><rect x="6" y="0" width="1.7" height="2.6" fill="#4fc3f7"/><rect x="0" y="2.1" width="10" height="2.4" fill="#4fc3f7"/><rect x="0.6" y="2.6" width="8.8" height="8" stroke="#4fc3f7" stroke-width="1.2" fill="none"/><rect x="2.2" y="5" width="5.6" height="4" fill="#9fdcfa"/><path d="M2.2 7H7.8M4.1 5V9M5.9 5V9" stroke="#e6f6fe" stroke-width=".6"/></svg>
<div class="a" style="left:794px;top:251px;width:157px;height:41px;border:1px solid #c5d3e4;box-sizing:border-box;background:#f0f5fa"></div>
<div class="t" style="left:804.5px;top:256.10px;transform-origin:0 0;font-size:9.8px;color:#8d9cb2;transform:scaleX(0.8806);">Data zakończenia:</div>
<div class="t" style="left:805px;top:271.42px;transform-origin:0 0;font-size:12.5px;color:#414e66;font-weight:700;-webkit-text-stroke:0.2px #414e66;transform:scaleX(0.8525);">23.04.2025, 10:30</div>
<div class="a" style="left:958px;top:251px;width:157px;height:41px;border:1px solid #c5d3e4;box-sizing:border-box;background:#ffffff"></div>
<div class="t" style="left:968.5px;top:256.10px;transform-origin:0 0;font-size:9.8px;color:#8d9cb2;transform:scaleX(0.8870);">Czas w minutach:</div>
<div class="t" style="left:969px;top:271.42px;transform-origin:0 0;font-size:12.5px;color:#414e66;font-weight:700;-webkit-text-stroke:0.2px #414e66;transform:scaleX(0.8631);">30</div>
<div class="a" style="left:1121px;top:251px;width:157px;height:41px;border:1px solid #c5d3e4;box-sizing:border-box;background:#ffffff"></div>
<div class="t" style="left:1131.5px;top:256.10px;transform-origin:0 0;font-size:9.8px;color:#8d9cb2;transform:scaleX(0.8933);">Czas normatywny w minutach:</div>
<div class="t" style="left:1132px;top:271.42px;transform-origin:0 0;font-size:12.5px;color:#414e66;font-weight:700;-webkit-text-stroke:0.2px #414e66;transform:scaleX(0.8631);">0</div>
<div class="t" style="left:630.5px;top:309.00px;transform-origin:0 0;font-size:13px;color:#43526a;-webkit-text-stroke:0.25px #43526a;transform:scaleX(0.8369);">Dane rezerwacji</div>
<div class="a" style="left:630px;top:332px;width:648px;height:1px;background:#e6ecf4;"></div>
<div class="a" style="left:630px;top:333px;width:648px;height:1px;background:#c5d3e4;"></div>
<div class="a" style="left:630px;top:343px;width:648px;height:40px;border:1px solid #c5d3e4;box-sizing:border-box;background:#ffffff"></div>
<div class="t" style="left:640.5px;top:348.10px;transform-origin:0 0;font-size:9.8px;color:#8d9cb2;transform:scaleX(0.8230);">Typ</div>
<div class="t" style="left:641px;top:362.92px;transform-origin:0 0;font-size:12.5px;color:#414e66;font-weight:700;-webkit-text-stroke:0.2px #414e66;transform:scaleX(0.7783);">Rezerwacja</div>
<svg class="a" style="left:1258px;top:360px;" width="8" height="5" viewBox="0 0 8 5"><path d="M0 0H8L4 4.5Z" fill="#4fc3f7"/></svg>
<div class="a" style="left:630px;top:388px;width:648px;height:53px;border:1px solid #c5d3e4;box-sizing:border-box;background:#ffffff"></div>
<div class="t" style="left:640.5px;top:393.10px;transform-origin:0 0;font-size:9.8px;color:#8d9cb2;transform:scaleX(0.8758);">Komentarz</div>
<div class="t" style="left:630.5px;top:457.00px;transform-origin:0 0;font-size:13px;color:#43526a;-webkit-text-stroke:0.25px #43526a;transform:scaleX(0.8525);">Zasób</div>
<div class="a" style="left:630px;top:481px;width:648px;height:1px;background:#e6ecf4;"></div>
<div class="a" style="left:630px;top:482px;width:648px;height:1px;background:#c5d3e4;"></div>
<div class="t" style="left:630.5px;top:493.74px;transform-origin:0 0;font-size:12px;color:#414e66;font-weight:700;-webkit-text-stroke:0.2px #414e66;transform:scaleX(0.7811);">Opony 1</div>
<div class="t" style="left:630.5px;top:523.70px;transform-origin:0 0;font-size:13px;color:#43526a;-webkit-text-stroke:0.25px #43526a;transform:scaleX(0.8514);">Dział</div>
<div class="a" style="left:630px;top:547px;width:648px;height:1px;background:#e6ecf4;"></div>
<div class="a" style="left:630px;top:548px;width:648px;height:1px;background:#c5d3e4;"></div>
<div class="a" style="left:630px;top:558px;width:321px;height:41px;border:1px solid #c5d3e4;box-sizing:border-box;background:#f0f5fa"></div>
<div class="t" style="left:640.5px;top:563.10px;transform-origin:0 0;font-size:9.8px;color:#8d9cb2;transform:scaleX(0.8786);">Utworzone przez</div>
<div class="t" style="left:641px;top:578.02px;transform-origin:0 0;font-size:12.5px;color:#414e66;font-weight:700;-webkit-text-stroke:0.2px #414e66;transform:scaleX(0.7621);">BOK Szczecin 1</div>
<div class="a" style="left:958px;top:558px;width:320px;height:41px;border:1px solid #c5d3e4;box-sizing:border-box;background:#f0f5fa"></div>
<div class="t" style="left:968.5px;top:563.10px;transform-origin:0 0;font-size:9.8px;color:#8d9cb2;transform:scaleX(0.8970);">Utworzył</div>
<div class="t" style="left:969px;top:578.02px;transform-origin:0 0;font-size:12.5px;color:#414e66;font-weight:700;-webkit-text-stroke:0.2px #414e66;transform:scaleX(0.8080);">Piekart Piotr</div>
<div class="t" style="left:630.5px;top:615.00px;transform-origin:0 0;font-size:13px;color:#43526a;-webkit-text-stroke:0.25px #43526a;transform:scaleX(0.8478);">Pojazd</div>
<div class="a" style="left:630px;top:638px;width:648px;height:1px;background:#e6ecf4;"></div>
<div class="a" style="left:630px;top:639px;width:648px;height:1px;background:#c5d3e4;"></div>
<div class="t" style="left:477.5px;width:800px;text-align:right;top:616.69px;transform-origin:100% 0;font-size:11px;color:#0b0c5e;font-weight:700;-webkit-text-stroke:0.2px #0b0c5e;transform:scaleX(0.8000);">WYCZYŚĆ</div>
<svg class="a" style="left:1219px;top:616px;" width="11" height="11" viewBox="0 0 11 11"><circle cx="2.4" cy="2.4" r="1.6" stroke="#4fc3f7" stroke-width="1.5" fill="none"/><circle cx="2.4" cy="8.6" r="1.6" stroke="#4fc3f7" stroke-width="1.5" fill="none"/><path d="M3.6 3.6L10.6 10.2M3.6 7.4L10.6 0.8" stroke="#4fc3f7" stroke-width="1.9"/></svg>
<div class="a" style="left:630px;top:649px;width:648px;height:41px;border:1px solid #c5d3e4;box-sizing:border-box;background:#ffffff"></div>
<div class="t" style="left:640.5px;top:654.10px;transform-origin:0 0;font-size:9.8px;color:#8d9cb2;transform:scaleX(0.8814);">Numer rejestracyjny</div>
<div class="t" style="left:641px;top:668.92px;transform-origin:0 0;font-size:12.5px;color:#414e66;font-weight:700;-webkit-text-stroke:0.2px #414e66;transform:scaleX(0.8116);">ZS2123P</div>
<svg class="a" style="left:1254.5px;top:668.7px;" width="14" height="14" viewBox="0 0 14 14"><circle cx="5.8" cy="5.8" r="4.3" stroke="#4fc3f7" stroke-width="1.8" fill="none"/><path d="M9 9L12.5 12.5" stroke="#4fc3f7" stroke-width="2.2" stroke-linecap="round"/></svg>
<div class="t" style="left:630.5px;top:707.00px;transform-origin:0 0;font-size:13px;color:#43526a;-webkit-text-stroke:0.25px #43526a;transform:scaleX(0.8665);">Kontakt</div>
<div class="a" style="left:630px;top:730px;width:648px;height:1px;background:#e6ecf4;"></div>
<div class="a" style="left:630px;top:731px;width:648px;height:1px;background:#c5d3e4;"></div>
<div class="t" style="left:477.5px;width:800px;text-align:right;top:708.09px;transform-origin:100% 0;font-size:11px;color:#0b0c5e;font-weight:700;-webkit-text-stroke:0.2px #0b0c5e;transform:scaleX(0.8000);">WYCZYŚĆ</div>
<svg class="a" style="left:1219px;top:707.4px;" width="11" height="11" viewBox="0 0 11 11"><circle cx="2.4" cy="2.4" r="1.6" stroke="#4fc3f7" stroke-width="1.5" fill="none"/><circle cx="2.4" cy="8.6" r="1.6" stroke="#4fc3f7" stroke-width="1.5" fill="none"/><path d="M3.6 3.6L10.6 10.2M3.6 7.4L10.6 0.8" stroke="#4fc3f7" stroke-width="1.9"/></svg>
<div class="a" style="left:630px;top:741px;width:321px;height:40px;border:1px solid #c5d3e4;box-sizing:border-box;background:#ffffff"></div>
<div class="t" style="left:640.5px;top:746.10px;transform-origin:0 0;font-size:9.8px;color:#8d9cb2;transform:scaleX(0.9021);">Imię</div>
<div class="a" style="left:958px;top:741px;width:320px;height:40px;border:1px solid #c5d3e4;box-sizing:border-box;background:#ffffff"></div>
<div class="t" style="left:968.5px;top:746.10px;transform-origin:0 0;font-size:9.8px;color:#8d9cb2;transform:scaleX(0.8400);">Nazwisko</div>
<svg class="a" style="left:1254.5px;top:759.7px;" width="14" height="14" viewBox="0 0 14 14"><circle cx="5.8" cy="5.8" r="4.3" stroke="#4fc3f7" stroke-width="1.8" fill="none"/><path d="M9 9L12.5 12.5" stroke="#4fc3f7" stroke-width="2.2" stroke-linecap="round"/></svg>
<div class="a" style="left:630px;top:786px;width:103px;height:40px;border:1px solid #c5d3e4;box-sizing:border-box;background:#ffffff"></div>
<div class="t" style="left:640.5px;top:791.10px;transform-origin:0 0;font-size:9.8px;color:#8d9cb2;transform:scaleX(0.8782);">Prefix</div>
<div class="t" style="left:641px;top:805.92px;transform-origin:0 0;font-size:12.5px;color:#414e66;font-weight:700;-webkit-text-stroke:0.2px #414e66;transform:scaleX(0.8112);">+48</div>
<div class="a" style="left:739px;top:786px;width:212px;height:40px;border:1px solid #c5d3e4;box-sizing:border-box;background:#ffffff"></div>
<div class="t" style="left:749.5px;top:791.10px;transform-origin:0 0;font-size:9.8px;color:#8d9cb2;transform:scaleX(0.8955);">Numer telefonu</div>
<svg class="a" style="left:927px;top:804.7px;" width="14" height="14" viewBox="0 0 14 14"><circle cx="5.8" cy="5.8" r="4.3" stroke="#4fc3f7" stroke-width="1.8" fill="none"/><path d="M9 9L12.5 12.5" stroke="#4fc3f7" stroke-width="2.2" stroke-linecap="round"/></svg>
<div class="a" style="left:958px;top:786px;width:320px;height:40px;border:1px solid #c5d3e4;box-sizing:border-box;background:#ffffff"></div>
<div class="t" style="left:968.5px;top:791.10px;transform-origin:0 0;font-size:9.8px;color:#8d9cb2;transform:scaleX(0.8400);">E-mail</div>
<svg class="a" style="left:1254.5px;top:804.7px;" width="14" height="14" viewBox="0 0 14 14"><circle cx="5.8" cy="5.8" r="4.3" stroke="#4fc3f7" stroke-width="1.8" fill="none"/><path d="M9 9L12.5 12.5" stroke="#4fc3f7" stroke-width="2.2" stroke-linecap="round"/></svg>
<div class="a" style="left:887px;top:879px;width:135px;height:34px;background:#06076b;"></div>
<svg class="a" style="left:900px;top:889px;" width="12" height="12" viewBox="0 0 12 12"><circle cx="6" cy="6" r="5.2" stroke="#4fc3f7" stroke-width="1.2" fill="none"/><path d="M6 3V9M3 6H9" stroke="#4fc3f7" stroke-width="1.5"/></svg>
<div class="t" style="left:916px;top:889.69px;transform-origin:0 0;font-size:11px;color:#ffffff;font-weight:700;-webkit-text-stroke:0.2px #ffffff;transform:scaleX(0.7812);">DODAJ REZERWACJĘ</div>
<svg class="a" style="left:1104px;top:542px;" width="16" height="21" viewBox="0 0 16 21"><path d="M1 1V17.5L4.5 14 7 19.2 9.6 17.9 7.1 12.8H12.8Z" fill="#0af0b2" stroke="#000" stroke-width="1.2" stroke-linejoin="miter"/></svg>
<div class="a" style="left:63px;top:645px;width:145px;height:129px;border:4px solid #00ff00;box-sizing:border-box;box-shadow:2px 3px 4px rgba(0,0,0,.35), inset 2px 3px 4px rgba(0,0,0,.3)"></div>
<div class="a" style="left:436px;top:726px;width:75px;height:49px;border:4px solid #00ff00;box-sizing:border-box;box-shadow:2px 3px 4px rgba(0,0,0,.35), inset 2px 3px 4px rgba(0,0,0,.3)"></div>
<div class="a" style="left:875px;top:870px;width:154px;height:49px;border:4px solid #00ff00;box-sizing:border-box;box-shadow:2px 3px 4px rgba(0,0,0,.35), inset 2px 3px 4px rgba(0,0,0,.3)"></div>
</body></html>
